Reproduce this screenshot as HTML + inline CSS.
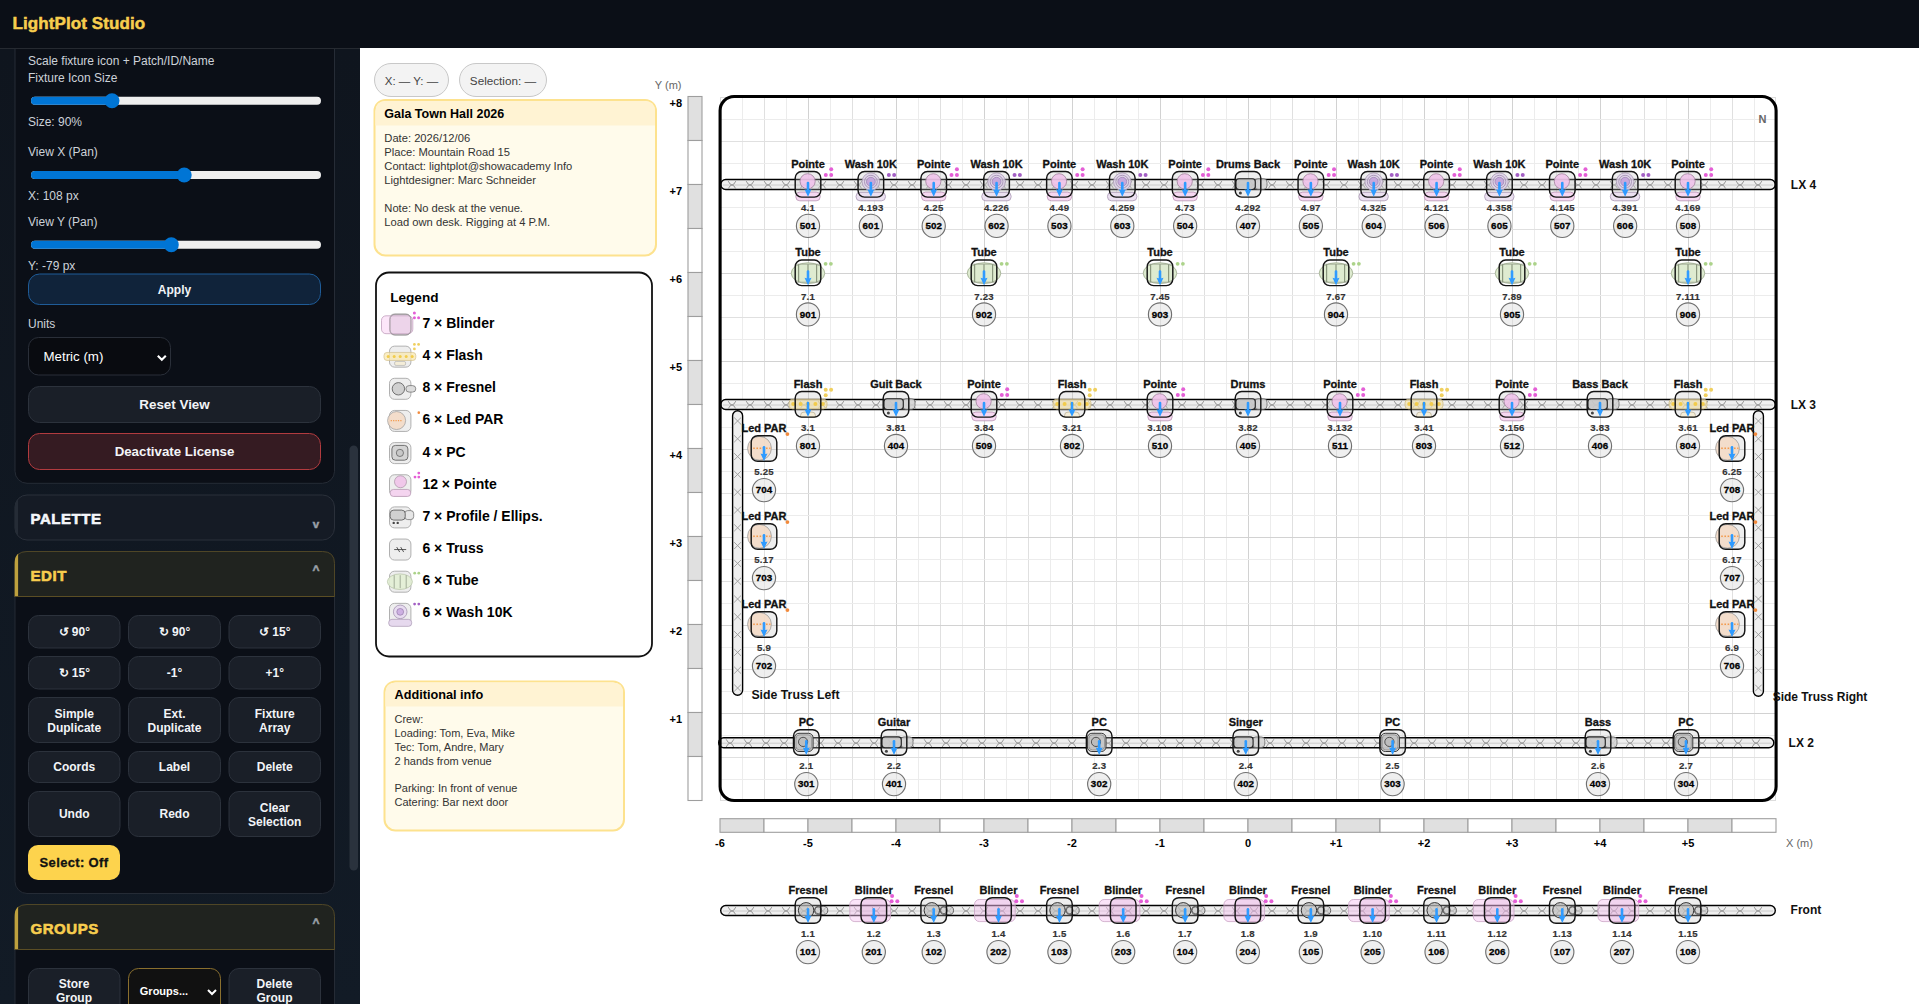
<!DOCTYPE html>
<html><head><meta charset="utf-8"><title>LightPlot Studio</title>
<style>
html,body{margin:0;padding:0;width:1919px;height:1004px;overflow:hidden;background:#fff;}
svg{display:block;font-family:"Liberation Sans", sans-serif;}
</style></head><body>
<svg width="1919" height="1004" viewBox="0 0 1919 1004">
<rect x="360" y="49" width="1559" height="955" fill="#ffffff"/><rect x="374.5" y="63.5" width="74" height="33" rx="16.5" fill="#f3f3f3" stroke="#c8c8c8" stroke-width="1"/><text x="411.50" y="84.50" font-size="11.5" font-weight="400" fill="#444" text-anchor="middle" >X: — Y: —</text><rect x="459.5" y="63.5" width="87" height="33" rx="16.5" fill="#f3f3f3" stroke="#c8c8c8" stroke-width="1"/><text x="503.00" y="84.50" font-size="11.7" font-weight="400" fill="#444" text-anchor="middle" >Selection: —</text><rect x="374.5" y="100" width="281.5" height="155.5" rx="11" fill="#fffbeb" stroke="#fde28e" stroke-width="2"/><path d="M375.5 125.5 L375.5 111 Q375.5 101 385.5 101 L645 101 Q655 101 655 111 L655 125.5 Z" fill="#fff3d3"/><text x="384.30" y="117.70" font-size="12.5" font-weight="700" fill="#000" text-anchor="start" >Gala Town Hall 2026</text><text x="384.30" y="142.00" font-size="11.2" font-weight="400" fill="#333" text-anchor="start" >Date: 2026/12/06</text><text x="384.30" y="156.00" font-size="11.2" font-weight="400" fill="#333" text-anchor="start" >Place: Mountain Road 15</text><text x="384.30" y="170.00" font-size="11.2" font-weight="400" fill="#333" text-anchor="start" >Contact: lightplot@showacademy Info</text><text x="384.30" y="184.00" font-size="11.2" font-weight="400" fill="#333" text-anchor="start" >Lightdesigner: Marc Schneider</text><text x="384.30" y="212.00" font-size="11.2" font-weight="400" fill="#333" text-anchor="start" >Note: No desk at the venue.</text><text x="384.30" y="226.00" font-size="11.2" font-weight="400" fill="#333" text-anchor="start" >Load own desk. Rigging at 4 P.M.</text><rect x="376" y="272.5" width="276" height="384" rx="13" fill="#fff" stroke="#111" stroke-width="1.8"/><text x="390.20" y="301.60" font-size="13.6" font-weight="700" fill="#000" text-anchor="start" >Legend</text><text x="422.40" y="328.00" font-size="14" font-weight="700" fill="#000" text-anchor="start" >7 × Blinder</text><rect x="389.50" y="314.00" width="21.4" height="21" rx="5" fill="#eeeeee" stroke="#a8a8a8" stroke-width="0.9"/><rect x="381.50" y="315.80" width="31.3" height="17.9" rx="4.5" fill="rgba(250,214,245,0.6)" stroke="#c0a0bc" stroke-width="0.8"/><rect x="390.00" y="314.30" width="21" height="20.6" rx="5" fill="rgba(215,180,210,0.25)" stroke="#8f8a8e" stroke-width="0.8"/><circle cx="414.40" cy="313.00" r="1.5" fill="#e45ed6"/><circle cx="414.40" cy="317.80" r="1.5" fill="#e45ed6"/><circle cx="418.60" cy="317.80" r="1.5" fill="#e45ed6"/><text x="422.40" y="360.15" font-size="14" font-weight="700" fill="#000" text-anchor="start" >4 × Flash</text><rect x="389.50" y="346.15" width="21.4" height="21" rx="5" fill="#eeeeee" stroke="#a8a8a8" stroke-width="0.9"/><rect x="384.00" y="352.45" width="31.8" height="8" rx="3" fill="rgba(248,232,178,0.75)" stroke="#d2c08e" stroke-width="0.7"/><circle cx="388.20" cy="356.45" r="1.5" fill="#f2cc4c"/><circle cx="394.20" cy="356.45" r="1.5" fill="#f2cc4c"/><circle cx="400.20" cy="356.45" r="1.5" fill="#f2cc4c"/><circle cx="406.20" cy="356.45" r="1.5" fill="#f2cc4c"/><circle cx="412.20" cy="356.45" r="1.5" fill="#f2cc4c"/><rect x="394.60" y="361.45" width="11" height="4" rx="1.5" fill="#f4edd8" stroke="#aaa" stroke-width="0.6"/><circle cx="414.40" cy="344.45" r="1.4" fill="#f0d060"/><circle cx="418.60" cy="344.45" r="1.4" fill="#f0d060"/><circle cx="414.40" cy="348.95" r="1.4" fill="#f0d060"/><text x="422.40" y="392.30" font-size="14" font-weight="700" fill="#000" text-anchor="start" >8 × Fresnel</text><rect x="389.50" y="378.30" width="21.4" height="21" rx="5" fill="#eeeeee" stroke="#a8a8a8" stroke-width="0.9"/><rect x="405.90" y="385.60" width="9.9" height="6.5" rx="3.2" fill="#ddd" stroke="#666" stroke-width="0.7"/><circle cx="398.40" cy="388.80" r="6.2" fill="#d0d0d0" stroke="#555" stroke-width="0.8"/><text x="422.40" y="424.45" font-size="14" font-weight="700" fill="#000" text-anchor="start" >6 × Led PAR</text><rect x="389.50" y="410.45" width="21.4" height="21" rx="5" fill="#eeeeee" stroke="#a8a8a8" stroke-width="0.9"/><circle cx="396.60" cy="420.55" r="9" fill="rgba(243,218,198,0.9)" stroke="#999" stroke-width="0.7"/><line x1="390.70" y1="420.55" x2="401.70" y2="420.55" stroke="#f39a4c" stroke-width="1.2" stroke-dasharray="1.2 1.2"/><circle cx="418.80" cy="412.65" r="1.3" fill="#f28a3c"/><text x="422.40" y="456.60" font-size="14" font-weight="700" fill="#000" text-anchor="start" >4 × PC</text><rect x="389.50" y="442.60" width="21.4" height="21" rx="5" fill="#eeeeee" stroke="#a8a8a8" stroke-width="0.9"/><rect x="391.90" y="445.40" width="16" height="14.8" rx="3.5" fill="#d4d4d4" stroke="#555" stroke-width="0.8"/><circle cx="399.90" cy="452.90" r="3.6" fill="#c8c8c8" stroke="#555" stroke-width="0.7"/><text x="422.40" y="488.75" font-size="14" font-weight="700" fill="#000" text-anchor="start" >12 × Pointe</text><rect x="389.50" y="474.75" width="21.4" height="21" rx="5" fill="#eeeeee" stroke="#a8a8a8" stroke-width="0.9"/><circle cx="400.50" cy="481.75" r="6" fill="#f0c8ea" stroke="#a890a4" stroke-width="0.7"/><rect x="390.20" y="489.45" width="20.5" height="7" rx="3.2" fill="#f4d4ef" stroke="#b090ac" stroke-width="0.7"/><circle cx="418.80" cy="473.05" r="1.4" fill="#e45ed6"/><circle cx="415.00" cy="477.05" r="1.4" fill="#e45ed6"/><circle cx="418.80" cy="477.05" r="1.4" fill="#e45ed6"/><text x="422.40" y="520.90" font-size="14" font-weight="700" fill="#000" text-anchor="start" >7 × Profile / Ellips.</text><rect x="389.50" y="506.90" width="21.4" height="21" rx="5" fill="#eeeeee" stroke="#a8a8a8" stroke-width="0.9"/><rect x="404.70" y="510.60" width="9" height="9" rx="3" fill="#e6e6e6" stroke="#666" stroke-width="0.7"/><rect x="390.20" y="510.10" width="15" height="10" rx="3.5" fill="#d0d0d0" stroke="#555" stroke-width="0.8"/><circle cx="393.70" cy="522.90" r="1.2" fill="#444"/><circle cx="397.70" cy="522.90" r="1.2" fill="#444"/><text x="422.40" y="553.05" font-size="14" font-weight="700" fill="#000" text-anchor="start" >6 × Truss</text><rect x="389.50" y="539.05" width="21.4" height="21" rx="5" fill="#eeeeee" stroke="#a8a8a8" stroke-width="0.9"/><path d="M394.20 549.55L406.20 549.55M396.70 547.05L399.70 552.05M400.70 547.05L403.70 552.05" stroke="#333" stroke-width="0.8" fill="none"/><text x="422.40" y="585.20" font-size="14" font-weight="700" fill="#000" text-anchor="start" >6 × Tube</text><rect x="389.50" y="571.20" width="21.4" height="21" rx="5" fill="#eeeeee" stroke="#a8a8a8" stroke-width="0.9"/><ellipse cx="399.90" cy="581.70" rx="12.5" ry="7.8" fill="rgba(226,238,212,0.9)" stroke="#b5c2a5" stroke-width="0.7"/><line x1="394.20" y1="575.20" x2="394.20" y2="588.20" stroke="#9aa590" stroke-width="0.9"/><line x1="400.20" y1="575.20" x2="400.20" y2="588.20" stroke="#9aa590" stroke-width="0.9"/><line x1="406.20" y1="575.20" x2="406.20" y2="588.20" stroke="#9aa590" stroke-width="0.9"/><circle cx="414.70" cy="573.20" r="1.4" fill="#acd38a"/><circle cx="418.80" cy="573.20" r="1.4" fill="#acd38a"/><text x="422.40" y="617.35" font-size="14" font-weight="700" fill="#000" text-anchor="start" >6 × Wash 10K</text><rect x="389.50" y="603.35" width="21.4" height="21" rx="5" fill="#eeeeee" stroke="#a8a8a8" stroke-width="0.9"/><circle cx="400.20" cy="611.85" r="6.8" fill="#e8dcf0" stroke="#9a88a8" stroke-width="0.7"/><circle cx="400.20" cy="611.85" r="3.4" fill="#cdb0e2" stroke="#8a70a0" stroke-width="0.6"/><rect x="388.70" y="619.35" width="23" height="7" rx="3.2" fill="#e6d9ee" stroke="#a897b2" stroke-width="0.7"/><circle cx="414.60" cy="604.05" r="1.4" fill="#a35fc4"/><circle cx="418.80" cy="604.05" r="1.4" fill="#a35fc4"/><rect x="384.5" y="681.5" width="239.5" height="149" rx="11" fill="#fffbeb" stroke="#fde28e" stroke-width="2"/><path d="M385.5 706.6 L385.5 692.5 Q385.5 682.5 395.5 682.5 L613 682.5 Q623 682.5 623 692.5 L623 706.6 Z" fill="#fff3d3"/><text x="394.50" y="698.70" font-size="12.7" font-weight="700" fill="#000" text-anchor="start" >Additional info</text><text x="394.50" y="722.70" font-size="11" font-weight="400" fill="#333" text-anchor="start" >Crew:</text><text x="394.50" y="736.65" font-size="11" font-weight="400" fill="#333" text-anchor="start" >Loading: Tom, Eva, Mike</text><text x="394.50" y="750.60" font-size="11" font-weight="400" fill="#333" text-anchor="start" >Tec: Tom, Andre, Mary</text><text x="394.50" y="764.55" font-size="11" font-weight="400" fill="#333" text-anchor="start" >2 hands from venue</text><text x="394.50" y="792.45" font-size="11" font-weight="400" fill="#333" text-anchor="start" >Parking: In front of venue</text><text x="394.50" y="806.40" font-size="11" font-weight="400" fill="#333" text-anchor="start" >Catering: Bar next door</text><text x="681.50" y="88.50" font-size="11" font-weight="400" fill="#666" text-anchor="end" >Y (m)</text><rect x="688" y="96.5" width="14" height="44" fill="#e0e0e0" stroke="#9e9e9e" stroke-width="1.1"/><rect x="688" y="140.5" width="14" height="44" fill="#ffffff" stroke="#9e9e9e" stroke-width="1.1"/><rect x="688" y="184.5" width="14" height="44" fill="#e0e0e0" stroke="#9e9e9e" stroke-width="1.1"/><rect x="688" y="228.5" width="14" height="44" fill="#ffffff" stroke="#9e9e9e" stroke-width="1.1"/><rect x="688" y="272.5" width="14" height="44" fill="#e0e0e0" stroke="#9e9e9e" stroke-width="1.1"/><rect x="688" y="316.5" width="14" height="44" fill="#ffffff" stroke="#9e9e9e" stroke-width="1.1"/><rect x="688" y="360.5" width="14" height="44" fill="#e0e0e0" stroke="#9e9e9e" stroke-width="1.1"/><rect x="688" y="404.5" width="14" height="44" fill="#ffffff" stroke="#9e9e9e" stroke-width="1.1"/><rect x="688" y="448.5" width="14" height="44" fill="#e0e0e0" stroke="#9e9e9e" stroke-width="1.1"/><rect x="688" y="492.5" width="14" height="44" fill="#ffffff" stroke="#9e9e9e" stroke-width="1.1"/><rect x="688" y="536.5" width="14" height="44" fill="#e0e0e0" stroke="#9e9e9e" stroke-width="1.1"/><rect x="688" y="580.5" width="14" height="44" fill="#ffffff" stroke="#9e9e9e" stroke-width="1.1"/><rect x="688" y="624.5" width="14" height="44" fill="#e0e0e0" stroke="#9e9e9e" stroke-width="1.1"/><rect x="688" y="668.5" width="14" height="44" fill="#ffffff" stroke="#9e9e9e" stroke-width="1.1"/><rect x="688" y="712.5" width="14" height="44" fill="#e0e0e0" stroke="#9e9e9e" stroke-width="1.1"/><rect x="688" y="756.5" width="14" height="44" fill="#ffffff" stroke="#9e9e9e" stroke-width="1.1"/><text x="682.00" y="107.00" font-size="11" font-weight="700" fill="#000" text-anchor="end" >+8</text><text x="682.00" y="195.00" font-size="11" font-weight="700" fill="#000" text-anchor="end" >+7</text><text x="682.00" y="283.00" font-size="11" font-weight="700" fill="#000" text-anchor="end" >+6</text><text x="682.00" y="371.00" font-size="11" font-weight="700" fill="#000" text-anchor="end" >+5</text><text x="682.00" y="459.00" font-size="11" font-weight="700" fill="#000" text-anchor="end" >+4</text><text x="682.00" y="547.00" font-size="11" font-weight="700" fill="#000" text-anchor="end" >+3</text><text x="682.00" y="635.00" font-size="11" font-weight="700" fill="#000" text-anchor="end" >+2</text><text x="682.00" y="723.00" font-size="11" font-weight="700" fill="#000" text-anchor="end" >+1</text><rect x="720" y="818.7" width="44" height="13.6" fill="#e0e0e0" stroke="#9e9e9e" stroke-width="1.1"/><rect x="764" y="818.7" width="44" height="13.6" fill="#ffffff" stroke="#9e9e9e" stroke-width="1.1"/><rect x="808" y="818.7" width="44" height="13.6" fill="#e0e0e0" stroke="#9e9e9e" stroke-width="1.1"/><rect x="852" y="818.7" width="44" height="13.6" fill="#ffffff" stroke="#9e9e9e" stroke-width="1.1"/><rect x="896" y="818.7" width="44" height="13.6" fill="#e0e0e0" stroke="#9e9e9e" stroke-width="1.1"/><rect x="940" y="818.7" width="44" height="13.6" fill="#ffffff" stroke="#9e9e9e" stroke-width="1.1"/><rect x="984" y="818.7" width="44" height="13.6" fill="#e0e0e0" stroke="#9e9e9e" stroke-width="1.1"/><rect x="1028" y="818.7" width="44" height="13.6" fill="#ffffff" stroke="#9e9e9e" stroke-width="1.1"/><rect x="1072" y="818.7" width="44" height="13.6" fill="#e0e0e0" stroke="#9e9e9e" stroke-width="1.1"/><rect x="1116" y="818.7" width="44" height="13.6" fill="#ffffff" stroke="#9e9e9e" stroke-width="1.1"/><rect x="1160" y="818.7" width="44" height="13.6" fill="#e0e0e0" stroke="#9e9e9e" stroke-width="1.1"/><rect x="1204" y="818.7" width="44" height="13.6" fill="#ffffff" stroke="#9e9e9e" stroke-width="1.1"/><rect x="1248" y="818.7" width="44" height="13.6" fill="#e0e0e0" stroke="#9e9e9e" stroke-width="1.1"/><rect x="1292" y="818.7" width="44" height="13.6" fill="#ffffff" stroke="#9e9e9e" stroke-width="1.1"/><rect x="1336" y="818.7" width="44" height="13.6" fill="#e0e0e0" stroke="#9e9e9e" stroke-width="1.1"/><rect x="1380" y="818.7" width="44" height="13.6" fill="#ffffff" stroke="#9e9e9e" stroke-width="1.1"/><rect x="1424" y="818.7" width="44" height="13.6" fill="#e0e0e0" stroke="#9e9e9e" stroke-width="1.1"/><rect x="1468" y="818.7" width="44" height="13.6" fill="#ffffff" stroke="#9e9e9e" stroke-width="1.1"/><rect x="1512" y="818.7" width="44" height="13.6" fill="#e0e0e0" stroke="#9e9e9e" stroke-width="1.1"/><rect x="1556" y="818.7" width="44" height="13.6" fill="#ffffff" stroke="#9e9e9e" stroke-width="1.1"/><rect x="1600" y="818.7" width="44" height="13.6" fill="#e0e0e0" stroke="#9e9e9e" stroke-width="1.1"/><rect x="1644" y="818.7" width="44" height="13.6" fill="#ffffff" stroke="#9e9e9e" stroke-width="1.1"/><rect x="1688" y="818.7" width="44" height="13.6" fill="#e0e0e0" stroke="#9e9e9e" stroke-width="1.1"/><rect x="1732" y="818.7" width="44" height="13.6" fill="#ffffff" stroke="#9e9e9e" stroke-width="1.1"/><text x="720.00" y="847.20" font-size="11" font-weight="700" fill="#000" text-anchor="middle" >-6</text><text x="808.00" y="847.20" font-size="11" font-weight="700" fill="#000" text-anchor="middle" >-5</text><text x="896.00" y="847.20" font-size="11" font-weight="700" fill="#000" text-anchor="middle" >-4</text><text x="984.00" y="847.20" font-size="11" font-weight="700" fill="#000" text-anchor="middle" >-3</text><text x="1072.00" y="847.20" font-size="11" font-weight="700" fill="#000" text-anchor="middle" >-2</text><text x="1160.00" y="847.20" font-size="11" font-weight="700" fill="#000" text-anchor="middle" >-1</text><text x="1248.00" y="847.20" font-size="11" font-weight="700" fill="#000" text-anchor="middle" >0</text><text x="1336.00" y="847.20" font-size="11" font-weight="700" fill="#000" text-anchor="middle" >+1</text><text x="1424.00" y="847.20" font-size="11" font-weight="700" fill="#000" text-anchor="middle" >+2</text><text x="1512.00" y="847.20" font-size="11" font-weight="700" fill="#000" text-anchor="middle" >+3</text><text x="1600.00" y="847.20" font-size="11" font-weight="700" fill="#000" text-anchor="middle" >+4</text><text x="1688.00" y="847.20" font-size="11" font-weight="700" fill="#000" text-anchor="middle" >+5</text><text x="1786.00" y="847.30" font-size="11" font-weight="400" fill="#666" text-anchor="start" >X (m)</text><rect x="720.5" y="97.5" width="1055" height="703" fill="#fff" stroke="#dcdcdc" stroke-width="1"/><line x1="742.5" y1="97" x2="742.5" y2="801" stroke="#ececec" stroke-width="1"/><line x1="764.5" y1="97" x2="764.5" y2="801" stroke="#e0e0e0" stroke-width="1"/><line x1="786.5" y1="97" x2="786.5" y2="801" stroke="#ececec" stroke-width="1"/><line x1="808.5" y1="97" x2="808.5" y2="801" stroke="#d2d2d2" stroke-width="1"/><line x1="830.5" y1="97" x2="830.5" y2="801" stroke="#ececec" stroke-width="1"/><line x1="852.5" y1="97" x2="852.5" y2="801" stroke="#e0e0e0" stroke-width="1"/><line x1="874.5" y1="97" x2="874.5" y2="801" stroke="#ececec" stroke-width="1"/><line x1="896.5" y1="97" x2="896.5" y2="801" stroke="#d2d2d2" stroke-width="1"/><line x1="918.5" y1="97" x2="918.5" y2="801" stroke="#ececec" stroke-width="1"/><line x1="940.5" y1="97" x2="940.5" y2="801" stroke="#e0e0e0" stroke-width="1"/><line x1="962.5" y1="97" x2="962.5" y2="801" stroke="#ececec" stroke-width="1"/><line x1="984.5" y1="97" x2="984.5" y2="801" stroke="#d2d2d2" stroke-width="1"/><line x1="1006.5" y1="97" x2="1006.5" y2="801" stroke="#ececec" stroke-width="1"/><line x1="1028.5" y1="97" x2="1028.5" y2="801" stroke="#e0e0e0" stroke-width="1"/><line x1="1050.5" y1="97" x2="1050.5" y2="801" stroke="#ececec" stroke-width="1"/><line x1="1072.5" y1="97" x2="1072.5" y2="801" stroke="#d2d2d2" stroke-width="1"/><line x1="1094.5" y1="97" x2="1094.5" y2="801" stroke="#ececec" stroke-width="1"/><line x1="1116.5" y1="97" x2="1116.5" y2="801" stroke="#e0e0e0" stroke-width="1"/><line x1="1138.5" y1="97" x2="1138.5" y2="801" stroke="#ececec" stroke-width="1"/><line x1="1160.5" y1="97" x2="1160.5" y2="801" stroke="#d2d2d2" stroke-width="1"/><line x1="1182.5" y1="97" x2="1182.5" y2="801" stroke="#ececec" stroke-width="1"/><line x1="1204.5" y1="97" x2="1204.5" y2="801" stroke="#e0e0e0" stroke-width="1"/><line x1="1226.5" y1="97" x2="1226.5" y2="801" stroke="#ececec" stroke-width="1"/><line x1="1248.5" y1="97" x2="1248.5" y2="801" stroke="#d2d2d2" stroke-width="1"/><line x1="1270.5" y1="97" x2="1270.5" y2="801" stroke="#ececec" stroke-width="1"/><line x1="1292.5" y1="97" x2="1292.5" y2="801" stroke="#e0e0e0" stroke-width="1"/><line x1="1314.5" y1="97" x2="1314.5" y2="801" stroke="#ececec" stroke-width="1"/><line x1="1336.5" y1="97" x2="1336.5" y2="801" stroke="#d2d2d2" stroke-width="1"/><line x1="1358.5" y1="97" x2="1358.5" y2="801" stroke="#ececec" stroke-width="1"/><line x1="1380.5" y1="97" x2="1380.5" y2="801" stroke="#e0e0e0" stroke-width="1"/><line x1="1402.5" y1="97" x2="1402.5" y2="801" stroke="#ececec" stroke-width="1"/><line x1="1424.5" y1="97" x2="1424.5" y2="801" stroke="#d2d2d2" stroke-width="1"/><line x1="1446.5" y1="97" x2="1446.5" y2="801" stroke="#ececec" stroke-width="1"/><line x1="1468.5" y1="97" x2="1468.5" y2="801" stroke="#e0e0e0" stroke-width="1"/><line x1="1490.5" y1="97" x2="1490.5" y2="801" stroke="#ececec" stroke-width="1"/><line x1="1512.5" y1="97" x2="1512.5" y2="801" stroke="#d2d2d2" stroke-width="1"/><line x1="1534.5" y1="97" x2="1534.5" y2="801" stroke="#ececec" stroke-width="1"/><line x1="1556.5" y1="97" x2="1556.5" y2="801" stroke="#e0e0e0" stroke-width="1"/><line x1="1578.5" y1="97" x2="1578.5" y2="801" stroke="#ececec" stroke-width="1"/><line x1="1600.5" y1="97" x2="1600.5" y2="801" stroke="#d2d2d2" stroke-width="1"/><line x1="1622.5" y1="97" x2="1622.5" y2="801" stroke="#ececec" stroke-width="1"/><line x1="1644.5" y1="97" x2="1644.5" y2="801" stroke="#e0e0e0" stroke-width="1"/><line x1="1666.5" y1="97" x2="1666.5" y2="801" stroke="#ececec" stroke-width="1"/><line x1="1688.5" y1="97" x2="1688.5" y2="801" stroke="#d2d2d2" stroke-width="1"/><line x1="1710.5" y1="97" x2="1710.5" y2="801" stroke="#ececec" stroke-width="1"/><line x1="1732.5" y1="97" x2="1732.5" y2="801" stroke="#e0e0e0" stroke-width="1"/><line x1="1754.5" y1="97" x2="1754.5" y2="801" stroke="#ececec" stroke-width="1"/><line x1="720" y1="119.5" x2="1776" y2="119.5" stroke="#ececec" stroke-width="1"/><line x1="720" y1="141.5" x2="1776" y2="141.5" stroke="#e0e0e0" stroke-width="1"/><line x1="720" y1="163.5" x2="1776" y2="163.5" stroke="#ececec" stroke-width="1"/><line x1="720" y1="185.5" x2="1776" y2="185.5" stroke="#d2d2d2" stroke-width="1"/><line x1="720" y1="207.5" x2="1776" y2="207.5" stroke="#ececec" stroke-width="1"/><line x1="720" y1="229.5" x2="1776" y2="229.5" stroke="#e0e0e0" stroke-width="1"/><line x1="720" y1="251.5" x2="1776" y2="251.5" stroke="#ececec" stroke-width="1"/><line x1="720" y1="273.5" x2="1776" y2="273.5" stroke="#d2d2d2" stroke-width="1"/><line x1="720" y1="295.5" x2="1776" y2="295.5" stroke="#ececec" stroke-width="1"/><line x1="720" y1="317.5" x2="1776" y2="317.5" stroke="#e0e0e0" stroke-width="1"/><line x1="720" y1="339.5" x2="1776" y2="339.5" stroke="#ececec" stroke-width="1"/><line x1="720" y1="361.5" x2="1776" y2="361.5" stroke="#d2d2d2" stroke-width="1"/><line x1="720" y1="383.5" x2="1776" y2="383.5" stroke="#ececec" stroke-width="1"/><line x1="720" y1="405.5" x2="1776" y2="405.5" stroke="#e0e0e0" stroke-width="1"/><line x1="720" y1="427.5" x2="1776" y2="427.5" stroke="#ececec" stroke-width="1"/><line x1="720" y1="449.5" x2="1776" y2="449.5" stroke="#d2d2d2" stroke-width="1"/><line x1="720" y1="471.5" x2="1776" y2="471.5" stroke="#ececec" stroke-width="1"/><line x1="720" y1="493.5" x2="1776" y2="493.5" stroke="#e0e0e0" stroke-width="1"/><line x1="720" y1="515.5" x2="1776" y2="515.5" stroke="#ececec" stroke-width="1"/><line x1="720" y1="537.5" x2="1776" y2="537.5" stroke="#d2d2d2" stroke-width="1"/><line x1="720" y1="559.5" x2="1776" y2="559.5" stroke="#ececec" stroke-width="1"/><line x1="720" y1="581.5" x2="1776" y2="581.5" stroke="#e0e0e0" stroke-width="1"/><line x1="720" y1="603.5" x2="1776" y2="603.5" stroke="#ececec" stroke-width="1"/><line x1="720" y1="625.5" x2="1776" y2="625.5" stroke="#d2d2d2" stroke-width="1"/><line x1="720" y1="647.5" x2="1776" y2="647.5" stroke="#ececec" stroke-width="1"/><line x1="720" y1="669.5" x2="1776" y2="669.5" stroke="#e0e0e0" stroke-width="1"/><line x1="720" y1="691.5" x2="1776" y2="691.5" stroke="#ececec" stroke-width="1"/><line x1="720" y1="713.5" x2="1776" y2="713.5" stroke="#d2d2d2" stroke-width="1"/><line x1="720" y1="735.5" x2="1776" y2="735.5" stroke="#ececec" stroke-width="1"/><line x1="720" y1="757.5" x2="1776" y2="757.5" stroke="#e0e0e0" stroke-width="1"/><line x1="720" y1="779.5" x2="1776" y2="779.5" stroke="#ececec" stroke-width="1"/><rect x="720.70" y="179.50" width="1054.60" height="10" rx="5" fill="#efefef" stroke="#000" stroke-width="1.4"/><line x1="723" y1="185.00" x2="1773" y2="185.00" stroke="#c4c4c4" stroke-width="0.8"/><path d="M728.2 181.1Q732.0 188.9 735.8 181.1M728.2 188.8Q732.0 181.0 735.8 188.8M746.2 181.1Q750.0 188.9 753.8 181.1M746.2 188.8Q750.0 181.0 753.8 188.8M764.2 181.1Q768.0 188.9 771.8 181.1M764.2 188.8Q768.0 181.0 771.8 188.8M782.2 181.1Q786.0 188.9 789.8 181.1M782.2 188.8Q786.0 181.0 789.8 188.8M800.2 181.1Q804.0 188.9 807.8 181.1M800.2 188.8Q804.0 181.0 807.8 188.8M818.2 181.1Q822.0 188.9 825.8 181.1M818.2 188.8Q822.0 181.0 825.8 188.8M836.2 181.1Q840.0 188.9 843.8 181.1M836.2 188.8Q840.0 181.0 843.8 188.8M854.2 181.1Q858.0 188.9 861.8 181.1M854.2 188.8Q858.0 181.0 861.8 188.8M872.2 181.1Q876.0 188.9 879.8 181.1M872.2 188.8Q876.0 181.0 879.8 188.8M890.2 181.1Q894.0 188.9 897.8 181.1M890.2 188.8Q894.0 181.0 897.8 188.8M908.2 181.1Q912.0 188.9 915.8 181.1M908.2 188.8Q912.0 181.0 915.8 188.8M926.2 181.1Q930.0 188.9 933.8 181.1M926.2 188.8Q930.0 181.0 933.8 188.8M944.2 181.1Q948.0 188.9 951.8 181.1M944.2 188.8Q948.0 181.0 951.8 188.8M962.2 181.1Q966.0 188.9 969.8 181.1M962.2 188.8Q966.0 181.0 969.8 188.8M980.2 181.1Q984.0 188.9 987.8 181.1M980.2 188.8Q984.0 181.0 987.8 188.8M998.2 181.1Q1002.0 188.9 1005.8 181.1M998.2 188.8Q1002.0 181.0 1005.8 188.8M1016.2 181.1Q1020.0 188.9 1023.8 181.1M1016.2 188.8Q1020.0 181.0 1023.8 188.8M1034.2 181.1Q1038.0 188.9 1041.8 181.1M1034.2 188.8Q1038.0 181.0 1041.8 188.8M1052.2 181.1Q1056.0 188.9 1059.8 181.1M1052.2 188.8Q1056.0 181.0 1059.8 188.8M1070.2 181.1Q1074.0 188.9 1077.8 181.1M1070.2 188.8Q1074.0 181.0 1077.8 188.8M1088.2 181.1Q1092.0 188.9 1095.8 181.1M1088.2 188.8Q1092.0 181.0 1095.8 188.8M1106.2 181.1Q1110.0 188.9 1113.8 181.1M1106.2 188.8Q1110.0 181.0 1113.8 188.8M1124.2 181.1Q1128.0 188.9 1131.8 181.1M1124.2 188.8Q1128.0 181.0 1131.8 188.8M1142.2 181.1Q1146.0 188.9 1149.8 181.1M1142.2 188.8Q1146.0 181.0 1149.8 188.8M1160.2 181.1Q1164.0 188.9 1167.8 181.1M1160.2 188.8Q1164.0 181.0 1167.8 188.8M1178.2 181.1Q1182.0 188.9 1185.8 181.1M1178.2 188.8Q1182.0 181.0 1185.8 188.8M1196.2 181.1Q1200.0 188.9 1203.8 181.1M1196.2 188.8Q1200.0 181.0 1203.8 188.8M1214.2 181.1Q1218.0 188.9 1221.8 181.1M1214.2 188.8Q1218.0 181.0 1221.8 188.8M1232.2 181.1Q1236.0 188.9 1239.8 181.1M1232.2 188.8Q1236.0 181.0 1239.8 188.8M1250.2 181.1Q1254.0 188.9 1257.8 181.1M1250.2 188.8Q1254.0 181.0 1257.8 188.8M1268.2 181.1Q1272.0 188.9 1275.8 181.1M1268.2 188.8Q1272.0 181.0 1275.8 188.8M1286.2 181.1Q1290.0 188.9 1293.8 181.1M1286.2 188.8Q1290.0 181.0 1293.8 188.8M1304.2 181.1Q1308.0 188.9 1311.8 181.1M1304.2 188.8Q1308.0 181.0 1311.8 188.8M1322.2 181.1Q1326.0 188.9 1329.8 181.1M1322.2 188.8Q1326.0 181.0 1329.8 188.8M1340.2 181.1Q1344.0 188.9 1347.8 181.1M1340.2 188.8Q1344.0 181.0 1347.8 188.8M1358.2 181.1Q1362.0 188.9 1365.8 181.1M1358.2 188.8Q1362.0 181.0 1365.8 188.8M1376.2 181.1Q1380.0 188.9 1383.8 181.1M1376.2 188.8Q1380.0 181.0 1383.8 188.8M1394.2 181.1Q1398.0 188.9 1401.8 181.1M1394.2 188.8Q1398.0 181.0 1401.8 188.8M1412.2 181.1Q1416.0 188.9 1419.8 181.1M1412.2 188.8Q1416.0 181.0 1419.8 188.8M1430.2 181.1Q1434.0 188.9 1437.8 181.1M1430.2 188.8Q1434.0 181.0 1437.8 188.8M1448.2 181.1Q1452.0 188.9 1455.8 181.1M1448.2 188.8Q1452.0 181.0 1455.8 188.8M1466.2 181.1Q1470.0 188.9 1473.8 181.1M1466.2 188.8Q1470.0 181.0 1473.8 188.8M1484.2 181.1Q1488.0 188.9 1491.8 181.1M1484.2 188.8Q1488.0 181.0 1491.8 188.8M1502.2 181.1Q1506.0 188.9 1509.8 181.1M1502.2 188.8Q1506.0 181.0 1509.8 188.8M1520.2 181.1Q1524.0 188.9 1527.8 181.1M1520.2 188.8Q1524.0 181.0 1527.8 188.8M1538.2 181.1Q1542.0 188.9 1545.8 181.1M1538.2 188.8Q1542.0 181.0 1545.8 188.8M1556.2 181.1Q1560.0 188.9 1563.8 181.1M1556.2 188.8Q1560.0 181.0 1563.8 188.8M1574.2 181.1Q1578.0 188.9 1581.8 181.1M1574.2 188.8Q1578.0 181.0 1581.8 188.8M1592.2 181.1Q1596.0 188.9 1599.8 181.1M1592.2 188.8Q1596.0 181.0 1599.8 188.8M1610.2 181.1Q1614.0 188.9 1617.8 181.1M1610.2 188.8Q1614.0 181.0 1617.8 188.8M1628.2 181.1Q1632.0 188.9 1635.8 181.1M1628.2 188.8Q1632.0 181.0 1635.8 188.8M1646.2 181.1Q1650.0 188.9 1653.8 181.1M1646.2 188.8Q1650.0 181.0 1653.8 188.8M1664.2 181.1Q1668.0 188.9 1671.8 181.1M1664.2 188.8Q1668.0 181.0 1671.8 188.8M1682.2 181.1Q1686.0 188.9 1689.8 181.1M1682.2 188.8Q1686.0 181.0 1689.8 188.8M1700.2 181.1Q1704.0 188.9 1707.8 181.1M1700.2 188.8Q1704.0 181.0 1707.8 188.8M1718.2 181.1Q1722.0 188.9 1725.8 181.1M1718.2 188.8Q1722.0 181.0 1725.8 188.8M1736.2 181.1Q1740.0 188.9 1743.8 181.1M1736.2 188.8Q1740.0 181.0 1743.8 188.8M1754.2 181.1Q1758.0 188.9 1761.8 181.1M1754.2 188.8Q1758.0 181.0 1761.8 188.8" fill="none" stroke="#969696" stroke-width="1"/><rect x="720.70" y="399.50" width="1054.60" height="10" rx="5" fill="#efefef" stroke="#000" stroke-width="1.4"/><line x1="723" y1="405.00" x2="1773" y2="405.00" stroke="#c4c4c4" stroke-width="0.8"/><path d="M728.2 401.1Q732.0 408.9 735.8 401.1M728.2 408.8Q732.0 401.0 735.8 408.8M746.2 401.1Q750.0 408.9 753.8 401.1M746.2 408.8Q750.0 401.0 753.8 408.8M764.2 401.1Q768.0 408.9 771.8 401.1M764.2 408.8Q768.0 401.0 771.8 408.8M782.2 401.1Q786.0 408.9 789.8 401.1M782.2 408.8Q786.0 401.0 789.8 408.8M800.2 401.1Q804.0 408.9 807.8 401.1M800.2 408.8Q804.0 401.0 807.8 408.8M818.2 401.1Q822.0 408.9 825.8 401.1M818.2 408.8Q822.0 401.0 825.8 408.8M836.2 401.1Q840.0 408.9 843.8 401.1M836.2 408.8Q840.0 401.0 843.8 408.8M854.2 401.1Q858.0 408.9 861.8 401.1M854.2 408.8Q858.0 401.0 861.8 408.8M872.2 401.1Q876.0 408.9 879.8 401.1M872.2 408.8Q876.0 401.0 879.8 408.8M890.2 401.1Q894.0 408.9 897.8 401.1M890.2 408.8Q894.0 401.0 897.8 408.8M908.2 401.1Q912.0 408.9 915.8 401.1M908.2 408.8Q912.0 401.0 915.8 408.8M926.2 401.1Q930.0 408.9 933.8 401.1M926.2 408.8Q930.0 401.0 933.8 408.8M944.2 401.1Q948.0 408.9 951.8 401.1M944.2 408.8Q948.0 401.0 951.8 408.8M962.2 401.1Q966.0 408.9 969.8 401.1M962.2 408.8Q966.0 401.0 969.8 408.8M980.2 401.1Q984.0 408.9 987.8 401.1M980.2 408.8Q984.0 401.0 987.8 408.8M998.2 401.1Q1002.0 408.9 1005.8 401.1M998.2 408.8Q1002.0 401.0 1005.8 408.8M1016.2 401.1Q1020.0 408.9 1023.8 401.1M1016.2 408.8Q1020.0 401.0 1023.8 408.8M1034.2 401.1Q1038.0 408.9 1041.8 401.1M1034.2 408.8Q1038.0 401.0 1041.8 408.8M1052.2 401.1Q1056.0 408.9 1059.8 401.1M1052.2 408.8Q1056.0 401.0 1059.8 408.8M1070.2 401.1Q1074.0 408.9 1077.8 401.1M1070.2 408.8Q1074.0 401.0 1077.8 408.8M1088.2 401.1Q1092.0 408.9 1095.8 401.1M1088.2 408.8Q1092.0 401.0 1095.8 408.8M1106.2 401.1Q1110.0 408.9 1113.8 401.1M1106.2 408.8Q1110.0 401.0 1113.8 408.8M1124.2 401.1Q1128.0 408.9 1131.8 401.1M1124.2 408.8Q1128.0 401.0 1131.8 408.8M1142.2 401.1Q1146.0 408.9 1149.8 401.1M1142.2 408.8Q1146.0 401.0 1149.8 408.8M1160.2 401.1Q1164.0 408.9 1167.8 401.1M1160.2 408.8Q1164.0 401.0 1167.8 408.8M1178.2 401.1Q1182.0 408.9 1185.8 401.1M1178.2 408.8Q1182.0 401.0 1185.8 408.8M1196.2 401.1Q1200.0 408.9 1203.8 401.1M1196.2 408.8Q1200.0 401.0 1203.8 408.8M1214.2 401.1Q1218.0 408.9 1221.8 401.1M1214.2 408.8Q1218.0 401.0 1221.8 408.8M1232.2 401.1Q1236.0 408.9 1239.8 401.1M1232.2 408.8Q1236.0 401.0 1239.8 408.8M1250.2 401.1Q1254.0 408.9 1257.8 401.1M1250.2 408.8Q1254.0 401.0 1257.8 408.8M1268.2 401.1Q1272.0 408.9 1275.8 401.1M1268.2 408.8Q1272.0 401.0 1275.8 408.8M1286.2 401.1Q1290.0 408.9 1293.8 401.1M1286.2 408.8Q1290.0 401.0 1293.8 408.8M1304.2 401.1Q1308.0 408.9 1311.8 401.1M1304.2 408.8Q1308.0 401.0 1311.8 408.8M1322.2 401.1Q1326.0 408.9 1329.8 401.1M1322.2 408.8Q1326.0 401.0 1329.8 408.8M1340.2 401.1Q1344.0 408.9 1347.8 401.1M1340.2 408.8Q1344.0 401.0 1347.8 408.8M1358.2 401.1Q1362.0 408.9 1365.8 401.1M1358.2 408.8Q1362.0 401.0 1365.8 408.8M1376.2 401.1Q1380.0 408.9 1383.8 401.1M1376.2 408.8Q1380.0 401.0 1383.8 408.8M1394.2 401.1Q1398.0 408.9 1401.8 401.1M1394.2 408.8Q1398.0 401.0 1401.8 408.8M1412.2 401.1Q1416.0 408.9 1419.8 401.1M1412.2 408.8Q1416.0 401.0 1419.8 408.8M1430.2 401.1Q1434.0 408.9 1437.8 401.1M1430.2 408.8Q1434.0 401.0 1437.8 408.8M1448.2 401.1Q1452.0 408.9 1455.8 401.1M1448.2 408.8Q1452.0 401.0 1455.8 408.8M1466.2 401.1Q1470.0 408.9 1473.8 401.1M1466.2 408.8Q1470.0 401.0 1473.8 408.8M1484.2 401.1Q1488.0 408.9 1491.8 401.1M1484.2 408.8Q1488.0 401.0 1491.8 408.8M1502.2 401.1Q1506.0 408.9 1509.8 401.1M1502.2 408.8Q1506.0 401.0 1509.8 408.8M1520.2 401.1Q1524.0 408.9 1527.8 401.1M1520.2 408.8Q1524.0 401.0 1527.8 408.8M1538.2 401.1Q1542.0 408.9 1545.8 401.1M1538.2 408.8Q1542.0 401.0 1545.8 408.8M1556.2 401.1Q1560.0 408.9 1563.8 401.1M1556.2 408.8Q1560.0 401.0 1563.8 408.8M1574.2 401.1Q1578.0 408.9 1581.8 401.1M1574.2 408.8Q1578.0 401.0 1581.8 408.8M1592.2 401.1Q1596.0 408.9 1599.8 401.1M1592.2 408.8Q1596.0 401.0 1599.8 408.8M1610.2 401.1Q1614.0 408.9 1617.8 401.1M1610.2 408.8Q1614.0 401.0 1617.8 408.8M1628.2 401.1Q1632.0 408.9 1635.8 401.1M1628.2 408.8Q1632.0 401.0 1635.8 408.8M1646.2 401.1Q1650.0 408.9 1653.8 401.1M1646.2 408.8Q1650.0 401.0 1653.8 408.8M1664.2 401.1Q1668.0 408.9 1671.8 401.1M1664.2 408.8Q1668.0 401.0 1671.8 408.8M1682.2 401.1Q1686.0 408.9 1689.8 401.1M1682.2 408.8Q1686.0 401.0 1689.8 408.8M1700.2 401.1Q1704.0 408.9 1707.8 401.1M1700.2 408.8Q1704.0 401.0 1707.8 408.8M1718.2 401.1Q1722.0 408.9 1725.8 401.1M1718.2 408.8Q1722.0 401.0 1725.8 408.8M1736.2 401.1Q1740.0 408.9 1743.8 401.1M1736.2 408.8Q1740.0 401.0 1743.8 408.8M1754.2 401.1Q1758.0 408.9 1761.8 401.1M1754.2 408.8Q1758.0 401.0 1761.8 408.8" fill="none" stroke="#969696" stroke-width="1"/><rect x="718.70" y="737.70" width="1055.10" height="10" rx="5" fill="#efefef" stroke="#000" stroke-width="1.4"/><line x1="721" y1="743.20" x2="1771.5" y2="743.20" stroke="#c4c4c4" stroke-width="0.8"/><path d="M726.2 739.3Q730.0 747.1 733.8 739.3M726.2 747.0Q730.0 739.2 733.8 747.0M744.2 739.3Q748.0 747.1 751.8 739.3M744.2 747.0Q748.0 739.2 751.8 747.0M762.2 739.3Q766.0 747.1 769.8 739.3M762.2 747.0Q766.0 739.2 769.8 747.0M780.2 739.3Q784.0 747.1 787.8 739.3M780.2 747.0Q784.0 739.2 787.8 747.0M798.2 739.3Q802.0 747.1 805.8 739.3M798.2 747.0Q802.0 739.2 805.8 747.0M816.2 739.3Q820.0 747.1 823.8 739.3M816.2 747.0Q820.0 739.2 823.8 747.0M834.2 739.3Q838.0 747.1 841.8 739.3M834.2 747.0Q838.0 739.2 841.8 747.0M852.2 739.3Q856.0 747.1 859.8 739.3M852.2 747.0Q856.0 739.2 859.8 747.0M870.2 739.3Q874.0 747.1 877.8 739.3M870.2 747.0Q874.0 739.2 877.8 747.0M888.2 739.3Q892.0 747.1 895.8 739.3M888.2 747.0Q892.0 739.2 895.8 747.0M906.2 739.3Q910.0 747.1 913.8 739.3M906.2 747.0Q910.0 739.2 913.8 747.0M924.2 739.3Q928.0 747.1 931.8 739.3M924.2 747.0Q928.0 739.2 931.8 747.0M942.2 739.3Q946.0 747.1 949.8 739.3M942.2 747.0Q946.0 739.2 949.8 747.0M960.2 739.3Q964.0 747.1 967.8 739.3M960.2 747.0Q964.0 739.2 967.8 747.0M978.2 739.3Q982.0 747.1 985.8 739.3M978.2 747.0Q982.0 739.2 985.8 747.0M996.2 739.3Q1000.0 747.1 1003.8 739.3M996.2 747.0Q1000.0 739.2 1003.8 747.0M1014.2 739.3Q1018.0 747.1 1021.8 739.3M1014.2 747.0Q1018.0 739.2 1021.8 747.0M1032.2 739.3Q1036.0 747.1 1039.8 739.3M1032.2 747.0Q1036.0 739.2 1039.8 747.0M1050.2 739.3Q1054.0 747.1 1057.8 739.3M1050.2 747.0Q1054.0 739.2 1057.8 747.0M1068.2 739.3Q1072.0 747.1 1075.8 739.3M1068.2 747.0Q1072.0 739.2 1075.8 747.0M1086.2 739.3Q1090.0 747.1 1093.8 739.3M1086.2 747.0Q1090.0 739.2 1093.8 747.0M1104.2 739.3Q1108.0 747.1 1111.8 739.3M1104.2 747.0Q1108.0 739.2 1111.8 747.0M1122.2 739.3Q1126.0 747.1 1129.8 739.3M1122.2 747.0Q1126.0 739.2 1129.8 747.0M1140.2 739.3Q1144.0 747.1 1147.8 739.3M1140.2 747.0Q1144.0 739.2 1147.8 747.0M1158.2 739.3Q1162.0 747.1 1165.8 739.3M1158.2 747.0Q1162.0 739.2 1165.8 747.0M1176.2 739.3Q1180.0 747.1 1183.8 739.3M1176.2 747.0Q1180.0 739.2 1183.8 747.0M1194.2 739.3Q1198.0 747.1 1201.8 739.3M1194.2 747.0Q1198.0 739.2 1201.8 747.0M1212.2 739.3Q1216.0 747.1 1219.8 739.3M1212.2 747.0Q1216.0 739.2 1219.8 747.0M1230.2 739.3Q1234.0 747.1 1237.8 739.3M1230.2 747.0Q1234.0 739.2 1237.8 747.0M1248.2 739.3Q1252.0 747.1 1255.8 739.3M1248.2 747.0Q1252.0 739.2 1255.8 747.0M1266.2 739.3Q1270.0 747.1 1273.8 739.3M1266.2 747.0Q1270.0 739.2 1273.8 747.0M1284.2 739.3Q1288.0 747.1 1291.8 739.3M1284.2 747.0Q1288.0 739.2 1291.8 747.0M1302.2 739.3Q1306.0 747.1 1309.8 739.3M1302.2 747.0Q1306.0 739.2 1309.8 747.0M1320.2 739.3Q1324.0 747.1 1327.8 739.3M1320.2 747.0Q1324.0 739.2 1327.8 747.0M1338.2 739.3Q1342.0 747.1 1345.8 739.3M1338.2 747.0Q1342.0 739.2 1345.8 747.0M1356.2 739.3Q1360.0 747.1 1363.8 739.3M1356.2 747.0Q1360.0 739.2 1363.8 747.0M1374.2 739.3Q1378.0 747.1 1381.8 739.3M1374.2 747.0Q1378.0 739.2 1381.8 747.0M1392.2 739.3Q1396.0 747.1 1399.8 739.3M1392.2 747.0Q1396.0 739.2 1399.8 747.0M1410.2 739.3Q1414.0 747.1 1417.8 739.3M1410.2 747.0Q1414.0 739.2 1417.8 747.0M1428.2 739.3Q1432.0 747.1 1435.8 739.3M1428.2 747.0Q1432.0 739.2 1435.8 747.0M1446.2 739.3Q1450.0 747.1 1453.8 739.3M1446.2 747.0Q1450.0 739.2 1453.8 747.0M1464.2 739.3Q1468.0 747.1 1471.8 739.3M1464.2 747.0Q1468.0 739.2 1471.8 747.0M1482.2 739.3Q1486.0 747.1 1489.8 739.3M1482.2 747.0Q1486.0 739.2 1489.8 747.0M1500.2 739.3Q1504.0 747.1 1507.8 739.3M1500.2 747.0Q1504.0 739.2 1507.8 747.0M1518.2 739.3Q1522.0 747.1 1525.8 739.3M1518.2 747.0Q1522.0 739.2 1525.8 747.0M1536.2 739.3Q1540.0 747.1 1543.8 739.3M1536.2 747.0Q1540.0 739.2 1543.8 747.0M1554.2 739.3Q1558.0 747.1 1561.8 739.3M1554.2 747.0Q1558.0 739.2 1561.8 747.0M1572.2 739.3Q1576.0 747.1 1579.8 739.3M1572.2 747.0Q1576.0 739.2 1579.8 747.0M1590.2 739.3Q1594.0 747.1 1597.8 739.3M1590.2 747.0Q1594.0 739.2 1597.8 747.0M1608.2 739.3Q1612.0 747.1 1615.8 739.3M1608.2 747.0Q1612.0 739.2 1615.8 747.0M1626.2 739.3Q1630.0 747.1 1633.8 739.3M1626.2 747.0Q1630.0 739.2 1633.8 747.0M1644.2 739.3Q1648.0 747.1 1651.8 739.3M1644.2 747.0Q1648.0 739.2 1651.8 747.0M1662.2 739.3Q1666.0 747.1 1669.8 739.3M1662.2 747.0Q1666.0 739.2 1669.8 747.0M1680.2 739.3Q1684.0 747.1 1687.8 739.3M1680.2 747.0Q1684.0 739.2 1687.8 747.0M1698.2 739.3Q1702.0 747.1 1705.8 739.3M1698.2 747.0Q1702.0 739.2 1705.8 747.0M1716.2 739.3Q1720.0 747.1 1723.8 739.3M1716.2 747.0Q1720.0 739.2 1723.8 747.0M1734.2 739.3Q1738.0 747.1 1741.8 739.3M1734.2 747.0Q1738.0 739.2 1741.8 747.0M1752.2 739.3Q1756.0 747.1 1759.8 739.3M1752.2 747.0Q1756.0 739.2 1759.8 747.0" fill="none" stroke="#969696" stroke-width="1"/><rect x="720.70" y="905.50" width="1054.60" height="10" rx="5" fill="#efefef" stroke="#000" stroke-width="1.4"/><line x1="723" y1="911.00" x2="1773" y2="911.00" stroke="#c4c4c4" stroke-width="0.8"/><path d="M728.2 907.1Q732.0 914.9 735.8 907.1M728.2 914.8Q732.0 907.0 735.8 914.8M746.2 907.1Q750.0 914.9 753.8 907.1M746.2 914.8Q750.0 907.0 753.8 914.8M764.2 907.1Q768.0 914.9 771.8 907.1M764.2 914.8Q768.0 907.0 771.8 914.8M782.2 907.1Q786.0 914.9 789.8 907.1M782.2 914.8Q786.0 907.0 789.8 914.8M800.2 907.1Q804.0 914.9 807.8 907.1M800.2 914.8Q804.0 907.0 807.8 914.8M818.2 907.1Q822.0 914.9 825.8 907.1M818.2 914.8Q822.0 907.0 825.8 914.8M836.2 907.1Q840.0 914.9 843.8 907.1M836.2 914.8Q840.0 907.0 843.8 914.8M854.2 907.1Q858.0 914.9 861.8 907.1M854.2 914.8Q858.0 907.0 861.8 914.8M872.2 907.1Q876.0 914.9 879.8 907.1M872.2 914.8Q876.0 907.0 879.8 914.8M890.2 907.1Q894.0 914.9 897.8 907.1M890.2 914.8Q894.0 907.0 897.8 914.8M908.2 907.1Q912.0 914.9 915.8 907.1M908.2 914.8Q912.0 907.0 915.8 914.8M926.2 907.1Q930.0 914.9 933.8 907.1M926.2 914.8Q930.0 907.0 933.8 914.8M944.2 907.1Q948.0 914.9 951.8 907.1M944.2 914.8Q948.0 907.0 951.8 914.8M962.2 907.1Q966.0 914.9 969.8 907.1M962.2 914.8Q966.0 907.0 969.8 914.8M980.2 907.1Q984.0 914.9 987.8 907.1M980.2 914.8Q984.0 907.0 987.8 914.8M998.2 907.1Q1002.0 914.9 1005.8 907.1M998.2 914.8Q1002.0 907.0 1005.8 914.8M1016.2 907.1Q1020.0 914.9 1023.8 907.1M1016.2 914.8Q1020.0 907.0 1023.8 914.8M1034.2 907.1Q1038.0 914.9 1041.8 907.1M1034.2 914.8Q1038.0 907.0 1041.8 914.8M1052.2 907.1Q1056.0 914.9 1059.8 907.1M1052.2 914.8Q1056.0 907.0 1059.8 914.8M1070.2 907.1Q1074.0 914.9 1077.8 907.1M1070.2 914.8Q1074.0 907.0 1077.8 914.8M1088.2 907.1Q1092.0 914.9 1095.8 907.1M1088.2 914.8Q1092.0 907.0 1095.8 914.8M1106.2 907.1Q1110.0 914.9 1113.8 907.1M1106.2 914.8Q1110.0 907.0 1113.8 914.8M1124.2 907.1Q1128.0 914.9 1131.8 907.1M1124.2 914.8Q1128.0 907.0 1131.8 914.8M1142.2 907.1Q1146.0 914.9 1149.8 907.1M1142.2 914.8Q1146.0 907.0 1149.8 914.8M1160.2 907.1Q1164.0 914.9 1167.8 907.1M1160.2 914.8Q1164.0 907.0 1167.8 914.8M1178.2 907.1Q1182.0 914.9 1185.8 907.1M1178.2 914.8Q1182.0 907.0 1185.8 914.8M1196.2 907.1Q1200.0 914.9 1203.8 907.1M1196.2 914.8Q1200.0 907.0 1203.8 914.8M1214.2 907.1Q1218.0 914.9 1221.8 907.1M1214.2 914.8Q1218.0 907.0 1221.8 914.8M1232.2 907.1Q1236.0 914.9 1239.8 907.1M1232.2 914.8Q1236.0 907.0 1239.8 914.8M1250.2 907.1Q1254.0 914.9 1257.8 907.1M1250.2 914.8Q1254.0 907.0 1257.8 914.8M1268.2 907.1Q1272.0 914.9 1275.8 907.1M1268.2 914.8Q1272.0 907.0 1275.8 914.8M1286.2 907.1Q1290.0 914.9 1293.8 907.1M1286.2 914.8Q1290.0 907.0 1293.8 914.8M1304.2 907.1Q1308.0 914.9 1311.8 907.1M1304.2 914.8Q1308.0 907.0 1311.8 914.8M1322.2 907.1Q1326.0 914.9 1329.8 907.1M1322.2 914.8Q1326.0 907.0 1329.8 914.8M1340.2 907.1Q1344.0 914.9 1347.8 907.1M1340.2 914.8Q1344.0 907.0 1347.8 914.8M1358.2 907.1Q1362.0 914.9 1365.8 907.1M1358.2 914.8Q1362.0 907.0 1365.8 914.8M1376.2 907.1Q1380.0 914.9 1383.8 907.1M1376.2 914.8Q1380.0 907.0 1383.8 914.8M1394.2 907.1Q1398.0 914.9 1401.8 907.1M1394.2 914.8Q1398.0 907.0 1401.8 914.8M1412.2 907.1Q1416.0 914.9 1419.8 907.1M1412.2 914.8Q1416.0 907.0 1419.8 914.8M1430.2 907.1Q1434.0 914.9 1437.8 907.1M1430.2 914.8Q1434.0 907.0 1437.8 914.8M1448.2 907.1Q1452.0 914.9 1455.8 907.1M1448.2 914.8Q1452.0 907.0 1455.8 914.8M1466.2 907.1Q1470.0 914.9 1473.8 907.1M1466.2 914.8Q1470.0 907.0 1473.8 914.8M1484.2 907.1Q1488.0 914.9 1491.8 907.1M1484.2 914.8Q1488.0 907.0 1491.8 914.8M1502.2 907.1Q1506.0 914.9 1509.8 907.1M1502.2 914.8Q1506.0 907.0 1509.8 914.8M1520.2 907.1Q1524.0 914.9 1527.8 907.1M1520.2 914.8Q1524.0 907.0 1527.8 914.8M1538.2 907.1Q1542.0 914.9 1545.8 907.1M1538.2 914.8Q1542.0 907.0 1545.8 914.8M1556.2 907.1Q1560.0 914.9 1563.8 907.1M1556.2 914.8Q1560.0 907.0 1563.8 914.8M1574.2 907.1Q1578.0 914.9 1581.8 907.1M1574.2 914.8Q1578.0 907.0 1581.8 914.8M1592.2 907.1Q1596.0 914.9 1599.8 907.1M1592.2 914.8Q1596.0 907.0 1599.8 914.8M1610.2 907.1Q1614.0 914.9 1617.8 907.1M1610.2 914.8Q1614.0 907.0 1617.8 914.8M1628.2 907.1Q1632.0 914.9 1635.8 907.1M1628.2 914.8Q1632.0 907.0 1635.8 914.8M1646.2 907.1Q1650.0 914.9 1653.8 907.1M1646.2 914.8Q1650.0 907.0 1653.8 914.8M1664.2 907.1Q1668.0 914.9 1671.8 907.1M1664.2 914.8Q1668.0 907.0 1671.8 914.8M1682.2 907.1Q1686.0 914.9 1689.8 907.1M1682.2 914.8Q1686.0 907.0 1689.8 914.8M1700.2 907.1Q1704.0 914.9 1707.8 907.1M1700.2 914.8Q1704.0 907.0 1707.8 914.8M1718.2 907.1Q1722.0 914.9 1725.8 907.1M1718.2 914.8Q1722.0 907.0 1725.8 914.8M1736.2 907.1Q1740.0 914.9 1743.8 907.1M1736.2 914.8Q1740.0 907.0 1743.8 914.8M1754.2 907.1Q1758.0 914.9 1761.8 907.1M1754.2 914.8Q1758.0 907.0 1761.8 914.8" fill="none" stroke="#969696" stroke-width="1"/><rect x="732.60" y="410.70" width="10" height="284.60" rx="5" fill="#efefef" stroke="#000" stroke-width="1.4"/><path d="M734.2 417.6L741.0 424.4M741.0 417.6L734.2 424.4M734.2 435.4L741.0 442.2M741.0 435.4L734.2 442.2M734.2 453.2L741.0 460.0M741.0 453.2L734.2 460.0M734.2 471.0L741.0 477.8M741.0 471.0L734.2 477.8M734.2 488.8L741.0 495.6M741.0 488.8L734.2 495.6M734.2 506.6L741.0 513.4M741.0 506.6L734.2 513.4M734.2 524.4L741.0 531.2M741.0 524.4L734.2 531.2M734.2 542.2L741.0 549.0M741.0 542.2L734.2 549.0M734.2 560.0L741.0 566.8M741.0 560.0L734.2 566.8M734.2 577.8L741.0 584.6M741.0 577.8L734.2 584.6M734.2 595.6L741.0 602.4M741.0 595.6L734.2 602.4M734.2 613.4L741.0 620.2M741.0 613.4L734.2 620.2M734.2 631.2L741.0 638.0M741.0 631.2L734.2 638.0M734.2 649.0L741.0 655.8M741.0 649.0L734.2 655.8M734.2 666.8L741.0 673.6M741.0 666.8L734.2 673.6M734.2 684.6L741.0 691.4M741.0 684.6L734.2 691.4" fill="none" stroke="#999" stroke-width="0.9"/><rect x="1753.40" y="410.70" width="10" height="285.60" rx="5" fill="#efefef" stroke="#000" stroke-width="1.4"/><path d="M1755.0 417.6L1761.8 424.4M1761.8 417.6L1755.0 424.4M1755.0 435.4L1761.8 442.2M1761.8 435.4L1755.0 442.2M1755.0 453.2L1761.8 460.0M1761.8 453.2L1755.0 460.0M1755.0 471.0L1761.8 477.8M1761.8 471.0L1755.0 477.8M1755.0 488.8L1761.8 495.6M1761.8 488.8L1755.0 495.6M1755.0 506.6L1761.8 513.4M1761.8 506.6L1755.0 513.4M1755.0 524.4L1761.8 531.2M1761.8 524.4L1755.0 531.2M1755.0 542.2L1761.8 549.0M1761.8 542.2L1755.0 549.0M1755.0 560.0L1761.8 566.8M1761.8 560.0L1755.0 566.8M1755.0 577.8L1761.8 584.6M1761.8 577.8L1755.0 584.6M1755.0 595.6L1761.8 602.4M1761.8 595.6L1755.0 602.4M1755.0 613.4L1761.8 620.2M1761.8 613.4L1755.0 620.2M1755.0 631.2L1761.8 638.0M1761.8 631.2L1755.0 638.0M1755.0 649.0L1761.8 655.8M1761.8 649.0L1755.0 655.8M1755.0 666.8L1761.8 673.6M1761.8 666.8L1755.0 673.6M1755.0 684.6L1761.8 691.4M1761.8 684.6L1755.0 691.4" fill="none" stroke="#999" stroke-width="0.9"/><rect x="720.1" y="96.5" width="1056" height="704" rx="14" fill="none" stroke="#000" stroke-width="3.1"/><text x="1762.40" y="122.90" font-size="11" font-weight="700" fill="#666" text-anchor="middle" >N</text><text x="1790.80" y="188.60" font-size="12" font-weight="700" fill="#111" text-anchor="start" >LX 4</text><text x="1790.70" y="408.70" font-size="12" font-weight="700" fill="#111" text-anchor="start" >LX 3</text><text x="1788.60" y="746.70" font-size="12" font-weight="700" fill="#111" text-anchor="start" >LX 2</text><text x="1790.60" y="914.40" font-size="12" font-weight="700" fill="#111" text-anchor="start" >Front</text><text x="751.40" y="698.50" font-size="12.3" font-weight="700" fill="#111" text-anchor="start" >Side Truss Left</text><text x="1772.70" y="700.80" font-size="12" font-weight="700" fill="#111" text-anchor="start" >Side Truss Right</text><rect x="795.20" y="171.50" width="25.6" height="25.6" rx="6.5" fill="rgba(200,200,200,0.3)"/><circle cx="807.60" cy="181.30" r="7.6" fill="rgba(240,194,234,0.9)" stroke="#a88aa4" stroke-width="0.9"/><rect x="795.80" y="192.10" width="24.4" height="8.7" rx="4" fill="rgba(246,210,240,0.85)" stroke="#b894b2" stroke-width="0.8"/><rect x="795.20" y="171.50" width="25.6" height="25.6" rx="6.5" fill="none" stroke="#151515" stroke-width="1.45"/><line x1="808.0" y1="183.10" x2="808.0" y2="192.30" stroke="#2f9bff" stroke-width="2.6" stroke-linecap="round"/><path d="M804.50 189.30Q808.00 190.50 811.50 189.30L808.00 196.80Z" fill="#2f9bff"/><circle cx="831.20" cy="169.30" r="2" fill="#e45ed6"/><circle cx="825.80" cy="175.10" r="2" fill="#e45ed6"/><circle cx="831.20" cy="175.10" r="2" fill="#e45ed6"/><text x="808.00" y="167.80" font-size="11" font-weight="700" fill="#111" text-anchor="middle" stroke="#111" stroke-width="0.3">Pointe</text><text x="808.00" y="211.00" font-size="9.6" font-weight="700" fill="#333" text-anchor="middle" letter-spacing="0.25" stroke="#333" stroke-width="0.2">4.1</text><circle cx="808.00" cy="225.90" r="11.6" fill="rgba(228,228,228,0.6)" stroke="#707070" stroke-width="1.15"/><text x="808.00" y="229.00" font-size="9.8" font-weight="700" fill="#000" text-anchor="middle" letter-spacing="0.1" stroke="#000" stroke-width="0.3">501</text><rect x="858.06" y="171.50" width="25.6" height="25.6" rx="6.5" fill="rgba(200,200,200,0.3)"/><circle cx="870.86" cy="181.70" r="8.8" fill="rgba(222,210,232,0.85)" stroke="#a898b4" stroke-width="0.8"/><circle cx="870.86" cy="181.70" r="6.4" fill="none" stroke="#9f8ab0" stroke-width="0.8"/><circle cx="870.86" cy="181.70" r="4.4" fill="#c6a8dc" stroke="#9a80b0" stroke-width="0.7"/><rect x="856.06" y="192.30" width="29.4" height="8.5" rx="4" fill="rgba(234,222,240,0.9)" stroke="#a897b2" stroke-width="0.8"/><rect x="858.06" y="171.50" width="25.6" height="25.6" rx="6.5" fill="none" stroke="#151515" stroke-width="1.45"/><line x1="870.8571428571429" y1="183.10" x2="870.8571428571429" y2="192.30" stroke="#2f9bff" stroke-width="2.6" stroke-linecap="round"/><path d="M867.36 189.30Q870.86 190.50 874.36 189.30L870.86 196.80Z" fill="#2f9bff"/><circle cx="888.86" cy="175.10" r="2" fill="#a35fc4"/><circle cx="894.16" cy="175.10" r="2" fill="#a35fc4"/><text x="870.86" y="167.80" font-size="11" font-weight="700" fill="#111" text-anchor="middle" stroke="#111" stroke-width="0.3">Wash 10K</text><text x="870.86" y="211.00" font-size="9.6" font-weight="700" fill="#333" text-anchor="middle" letter-spacing="0.25" stroke="#333" stroke-width="0.2">4.193</text><circle cx="870.86" cy="225.90" r="11.6" fill="rgba(228,228,228,0.6)" stroke="#707070" stroke-width="1.15"/><text x="870.86" y="229.00" font-size="9.8" font-weight="700" fill="#000" text-anchor="middle" letter-spacing="0.1" stroke="#000" stroke-width="0.3">601</text><rect x="920.91" y="171.50" width="25.6" height="25.6" rx="6.5" fill="rgba(200,200,200,0.3)"/><circle cx="933.31" cy="181.30" r="7.6" fill="rgba(240,194,234,0.9)" stroke="#a88aa4" stroke-width="0.9"/><rect x="921.51" y="192.10" width="24.4" height="8.7" rx="4" fill="rgba(246,210,240,0.85)" stroke="#b894b2" stroke-width="0.8"/><rect x="920.91" y="171.50" width="25.6" height="25.6" rx="6.5" fill="none" stroke="#151515" stroke-width="1.45"/><line x1="933.7142857142857" y1="183.10" x2="933.7142857142857" y2="192.30" stroke="#2f9bff" stroke-width="2.6" stroke-linecap="round"/><path d="M930.21 189.30Q933.71 190.50 937.21 189.30L933.71 196.80Z" fill="#2f9bff"/><circle cx="956.91" cy="169.30" r="2" fill="#e45ed6"/><circle cx="951.51" cy="175.10" r="2" fill="#e45ed6"/><circle cx="956.91" cy="175.10" r="2" fill="#e45ed6"/><text x="933.71" y="167.80" font-size="11" font-weight="700" fill="#111" text-anchor="middle" stroke="#111" stroke-width="0.3">Pointe</text><text x="933.71" y="211.00" font-size="9.6" font-weight="700" fill="#333" text-anchor="middle" letter-spacing="0.25" stroke="#333" stroke-width="0.2">4.25</text><circle cx="933.71" cy="225.90" r="11.6" fill="rgba(228,228,228,0.6)" stroke="#707070" stroke-width="1.15"/><text x="933.71" y="229.00" font-size="9.8" font-weight="700" fill="#000" text-anchor="middle" letter-spacing="0.1" stroke="#000" stroke-width="0.3">502</text><rect x="983.77" y="171.50" width="25.6" height="25.6" rx="6.5" fill="rgba(200,200,200,0.3)"/><circle cx="996.57" cy="181.70" r="8.8" fill="rgba(222,210,232,0.85)" stroke="#a898b4" stroke-width="0.8"/><circle cx="996.57" cy="181.70" r="6.4" fill="none" stroke="#9f8ab0" stroke-width="0.8"/><circle cx="996.57" cy="181.70" r="4.4" fill="#c6a8dc" stroke="#9a80b0" stroke-width="0.7"/><rect x="981.77" y="192.30" width="29.4" height="8.5" rx="4" fill="rgba(234,222,240,0.9)" stroke="#a897b2" stroke-width="0.8"/><rect x="983.77" y="171.50" width="25.6" height="25.6" rx="6.5" fill="none" stroke="#151515" stroke-width="1.45"/><line x1="996.5714285714286" y1="183.10" x2="996.5714285714286" y2="192.30" stroke="#2f9bff" stroke-width="2.6" stroke-linecap="round"/><path d="M993.07 189.30Q996.57 190.50 1000.07 189.30L996.57 196.80Z" fill="#2f9bff"/><circle cx="1014.57" cy="175.10" r="2" fill="#a35fc4"/><circle cx="1019.87" cy="175.10" r="2" fill="#a35fc4"/><text x="996.57" y="167.80" font-size="11" font-weight="700" fill="#111" text-anchor="middle" stroke="#111" stroke-width="0.3">Wash 10K</text><text x="996.57" y="211.00" font-size="9.6" font-weight="700" fill="#333" text-anchor="middle" letter-spacing="0.25" stroke="#333" stroke-width="0.2">4.226</text><circle cx="996.57" cy="225.90" r="11.6" fill="rgba(228,228,228,0.6)" stroke="#707070" stroke-width="1.15"/><text x="996.57" y="229.00" font-size="9.8" font-weight="700" fill="#000" text-anchor="middle" letter-spacing="0.1" stroke="#000" stroke-width="0.3">602</text><rect x="1046.63" y="171.50" width="25.6" height="25.6" rx="6.5" fill="rgba(200,200,200,0.3)"/><circle cx="1059.03" cy="181.30" r="7.6" fill="rgba(240,194,234,0.9)" stroke="#a88aa4" stroke-width="0.9"/><rect x="1047.23" y="192.10" width="24.4" height="8.7" rx="4" fill="rgba(246,210,240,0.85)" stroke="#b894b2" stroke-width="0.8"/><rect x="1046.63" y="171.50" width="25.6" height="25.6" rx="6.5" fill="none" stroke="#151515" stroke-width="1.45"/><line x1="1059.4285714285713" y1="183.10" x2="1059.4285714285713" y2="192.30" stroke="#2f9bff" stroke-width="2.6" stroke-linecap="round"/><path d="M1055.93 189.30Q1059.43 190.50 1062.93 189.30L1059.43 196.80Z" fill="#2f9bff"/><circle cx="1082.63" cy="169.30" r="2" fill="#e45ed6"/><circle cx="1077.23" cy="175.10" r="2" fill="#e45ed6"/><circle cx="1082.63" cy="175.10" r="2" fill="#e45ed6"/><text x="1059.43" y="167.80" font-size="11" font-weight="700" fill="#111" text-anchor="middle" stroke="#111" stroke-width="0.3">Pointe</text><text x="1059.43" y="211.00" font-size="9.6" font-weight="700" fill="#333" text-anchor="middle" letter-spacing="0.25" stroke="#333" stroke-width="0.2">4.49</text><circle cx="1059.43" cy="225.90" r="11.6" fill="rgba(228,228,228,0.6)" stroke="#707070" stroke-width="1.15"/><text x="1059.43" y="229.00" font-size="9.8" font-weight="700" fill="#000" text-anchor="middle" letter-spacing="0.1" stroke="#000" stroke-width="0.3">503</text><rect x="1109.49" y="171.50" width="25.6" height="25.6" rx="6.5" fill="rgba(200,200,200,0.3)"/><circle cx="1122.29" cy="181.70" r="8.8" fill="rgba(222,210,232,0.85)" stroke="#a898b4" stroke-width="0.8"/><circle cx="1122.29" cy="181.70" r="6.4" fill="none" stroke="#9f8ab0" stroke-width="0.8"/><circle cx="1122.29" cy="181.70" r="4.4" fill="#c6a8dc" stroke="#9a80b0" stroke-width="0.7"/><rect x="1107.49" y="192.30" width="29.4" height="8.5" rx="4" fill="rgba(234,222,240,0.9)" stroke="#a897b2" stroke-width="0.8"/><rect x="1109.49" y="171.50" width="25.6" height="25.6" rx="6.5" fill="none" stroke="#151515" stroke-width="1.45"/><line x1="1122.2857142857142" y1="183.10" x2="1122.2857142857142" y2="192.30" stroke="#2f9bff" stroke-width="2.6" stroke-linecap="round"/><path d="M1118.79 189.30Q1122.29 190.50 1125.79 189.30L1122.29 196.80Z" fill="#2f9bff"/><circle cx="1140.29" cy="175.10" r="2" fill="#a35fc4"/><circle cx="1145.59" cy="175.10" r="2" fill="#a35fc4"/><text x="1122.29" y="167.80" font-size="11" font-weight="700" fill="#111" text-anchor="middle" stroke="#111" stroke-width="0.3">Wash 10K</text><text x="1122.29" y="211.00" font-size="9.6" font-weight="700" fill="#333" text-anchor="middle" letter-spacing="0.25" stroke="#333" stroke-width="0.2">4.259</text><circle cx="1122.29" cy="225.90" r="11.6" fill="rgba(228,228,228,0.6)" stroke="#707070" stroke-width="1.15"/><text x="1122.29" y="229.00" font-size="9.8" font-weight="700" fill="#000" text-anchor="middle" letter-spacing="0.1" stroke="#000" stroke-width="0.3">603</text><rect x="1172.34" y="171.50" width="25.6" height="25.6" rx="6.5" fill="rgba(200,200,200,0.3)"/><circle cx="1184.74" cy="181.30" r="7.6" fill="rgba(240,194,234,0.9)" stroke="#a88aa4" stroke-width="0.9"/><rect x="1172.94" y="192.10" width="24.4" height="8.7" rx="4" fill="rgba(246,210,240,0.85)" stroke="#b894b2" stroke-width="0.8"/><rect x="1172.34" y="171.50" width="25.6" height="25.6" rx="6.5" fill="none" stroke="#151515" stroke-width="1.45"/><line x1="1185.142857142857" y1="183.10" x2="1185.142857142857" y2="192.30" stroke="#2f9bff" stroke-width="2.6" stroke-linecap="round"/><path d="M1181.64 189.30Q1185.14 190.50 1188.64 189.30L1185.14 196.80Z" fill="#2f9bff"/><circle cx="1208.34" cy="169.30" r="2" fill="#e45ed6"/><circle cx="1202.94" cy="175.10" r="2" fill="#e45ed6"/><circle cx="1208.34" cy="175.10" r="2" fill="#e45ed6"/><text x="1185.14" y="167.80" font-size="11" font-weight="700" fill="#111" text-anchor="middle" stroke="#111" stroke-width="0.3">Pointe</text><text x="1185.14" y="211.00" font-size="9.6" font-weight="700" fill="#333" text-anchor="middle" letter-spacing="0.25" stroke="#333" stroke-width="0.2">4.73</text><circle cx="1185.14" cy="225.90" r="11.6" fill="rgba(228,228,228,0.6)" stroke="#707070" stroke-width="1.15"/><text x="1185.14" y="229.00" font-size="9.8" font-weight="700" fill="#000" text-anchor="middle" letter-spacing="0.1" stroke="#000" stroke-width="0.3">504</text><rect x="1235.20" y="171.50" width="25.6" height="25.6" rx="6.5" fill="rgba(200,200,200,0.3)"/><rect x="1254.50" y="178.70" width="12.5" height="10.6" rx="3.5" fill="rgba(212,212,212,0.85)" stroke="#6a6a6a" stroke-width="0.8"/><rect x="1236.00" y="178.70" width="19.3" height="10.8" rx="3" fill="rgba(200,200,200,0.9)" stroke="#222" stroke-width="1.1"/><circle cx="1240.40" cy="193.00" r="1.5" fill="#444"/><rect x="1235.20" y="171.50" width="25.6" height="25.6" rx="6.5" fill="none" stroke="#151515" stroke-width="1.45"/><line x1="1248.0" y1="183.10" x2="1248.0" y2="192.30" stroke="#2f9bff" stroke-width="2.6" stroke-linecap="round"/><path d="M1244.50 189.30Q1248.00 190.50 1251.50 189.30L1248.00 196.80Z" fill="#2f9bff"/><text x="1248.00" y="167.80" font-size="11" font-weight="700" fill="#111" text-anchor="middle" stroke="#111" stroke-width="0.3">Drums Back</text><text x="1248.00" y="211.00" font-size="9.6" font-weight="700" fill="#333" text-anchor="middle" letter-spacing="0.25" stroke="#333" stroke-width="0.2">4.292</text><circle cx="1248.00" cy="225.90" r="11.6" fill="rgba(228,228,228,0.6)" stroke="#707070" stroke-width="1.15"/><text x="1248.00" y="229.00" font-size="9.8" font-weight="700" fill="#000" text-anchor="middle" letter-spacing="0.1" stroke="#000" stroke-width="0.3">407</text><rect x="1298.06" y="171.50" width="25.6" height="25.6" rx="6.5" fill="rgba(200,200,200,0.3)"/><circle cx="1310.46" cy="181.30" r="7.6" fill="rgba(240,194,234,0.9)" stroke="#a88aa4" stroke-width="0.9"/><rect x="1298.66" y="192.10" width="24.4" height="8.7" rx="4" fill="rgba(246,210,240,0.85)" stroke="#b894b2" stroke-width="0.8"/><rect x="1298.06" y="171.50" width="25.6" height="25.6" rx="6.5" fill="none" stroke="#151515" stroke-width="1.45"/><line x1="1310.857142857143" y1="183.10" x2="1310.857142857143" y2="192.30" stroke="#2f9bff" stroke-width="2.6" stroke-linecap="round"/><path d="M1307.36 189.30Q1310.86 190.50 1314.36 189.30L1310.86 196.80Z" fill="#2f9bff"/><circle cx="1334.06" cy="169.30" r="2" fill="#e45ed6"/><circle cx="1328.66" cy="175.10" r="2" fill="#e45ed6"/><circle cx="1334.06" cy="175.10" r="2" fill="#e45ed6"/><text x="1310.86" y="167.80" font-size="11" font-weight="700" fill="#111" text-anchor="middle" stroke="#111" stroke-width="0.3">Pointe</text><text x="1310.86" y="211.00" font-size="9.6" font-weight="700" fill="#333" text-anchor="middle" letter-spacing="0.25" stroke="#333" stroke-width="0.2">4.97</text><circle cx="1310.86" cy="225.90" r="11.6" fill="rgba(228,228,228,0.6)" stroke="#707070" stroke-width="1.15"/><text x="1310.86" y="229.00" font-size="9.8" font-weight="700" fill="#000" text-anchor="middle" letter-spacing="0.1" stroke="#000" stroke-width="0.3">505</text><rect x="1360.91" y="171.50" width="25.6" height="25.6" rx="6.5" fill="rgba(200,200,200,0.3)"/><circle cx="1373.71" cy="181.70" r="8.8" fill="rgba(222,210,232,0.85)" stroke="#a898b4" stroke-width="0.8"/><circle cx="1373.71" cy="181.70" r="6.4" fill="none" stroke="#9f8ab0" stroke-width="0.8"/><circle cx="1373.71" cy="181.70" r="4.4" fill="#c6a8dc" stroke="#9a80b0" stroke-width="0.7"/><rect x="1358.91" y="192.30" width="29.4" height="8.5" rx="4" fill="rgba(234,222,240,0.9)" stroke="#a897b2" stroke-width="0.8"/><rect x="1360.91" y="171.50" width="25.6" height="25.6" rx="6.5" fill="none" stroke="#151515" stroke-width="1.45"/><line x1="1373.7142857142858" y1="183.10" x2="1373.7142857142858" y2="192.30" stroke="#2f9bff" stroke-width="2.6" stroke-linecap="round"/><path d="M1370.21 189.30Q1373.71 190.50 1377.21 189.30L1373.71 196.80Z" fill="#2f9bff"/><circle cx="1391.71" cy="175.10" r="2" fill="#a35fc4"/><circle cx="1397.01" cy="175.10" r="2" fill="#a35fc4"/><text x="1373.71" y="167.80" font-size="11" font-weight="700" fill="#111" text-anchor="middle" stroke="#111" stroke-width="0.3">Wash 10K</text><text x="1373.71" y="211.00" font-size="9.6" font-weight="700" fill="#333" text-anchor="middle" letter-spacing="0.25" stroke="#333" stroke-width="0.2">4.325</text><circle cx="1373.71" cy="225.90" r="11.6" fill="rgba(228,228,228,0.6)" stroke="#707070" stroke-width="1.15"/><text x="1373.71" y="229.00" font-size="9.8" font-weight="700" fill="#000" text-anchor="middle" letter-spacing="0.1" stroke="#000" stroke-width="0.3">604</text><rect x="1423.77" y="171.50" width="25.6" height="25.6" rx="6.5" fill="rgba(200,200,200,0.3)"/><circle cx="1436.17" cy="181.30" r="7.6" fill="rgba(240,194,234,0.9)" stroke="#a88aa4" stroke-width="0.9"/><rect x="1424.37" y="192.10" width="24.4" height="8.7" rx="4" fill="rgba(246,210,240,0.85)" stroke="#b894b2" stroke-width="0.8"/><rect x="1423.77" y="171.50" width="25.6" height="25.6" rx="6.5" fill="none" stroke="#151515" stroke-width="1.45"/><line x1="1436.5714285714284" y1="183.10" x2="1436.5714285714284" y2="192.30" stroke="#2f9bff" stroke-width="2.6" stroke-linecap="round"/><path d="M1433.07 189.30Q1436.57 190.50 1440.07 189.30L1436.57 196.80Z" fill="#2f9bff"/><circle cx="1459.77" cy="169.30" r="2" fill="#e45ed6"/><circle cx="1454.37" cy="175.10" r="2" fill="#e45ed6"/><circle cx="1459.77" cy="175.10" r="2" fill="#e45ed6"/><text x="1436.57" y="167.80" font-size="11" font-weight="700" fill="#111" text-anchor="middle" stroke="#111" stroke-width="0.3">Pointe</text><text x="1436.57" y="211.00" font-size="9.6" font-weight="700" fill="#333" text-anchor="middle" letter-spacing="0.25" stroke="#333" stroke-width="0.2">4.121</text><circle cx="1436.57" cy="225.90" r="11.6" fill="rgba(228,228,228,0.6)" stroke="#707070" stroke-width="1.15"/><text x="1436.57" y="229.00" font-size="9.8" font-weight="700" fill="#000" text-anchor="middle" letter-spacing="0.1" stroke="#000" stroke-width="0.3">506</text><rect x="1486.63" y="171.50" width="25.6" height="25.6" rx="6.5" fill="rgba(200,200,200,0.3)"/><circle cx="1499.43" cy="181.70" r="8.8" fill="rgba(222,210,232,0.85)" stroke="#a898b4" stroke-width="0.8"/><circle cx="1499.43" cy="181.70" r="6.4" fill="none" stroke="#9f8ab0" stroke-width="0.8"/><circle cx="1499.43" cy="181.70" r="4.4" fill="#c6a8dc" stroke="#9a80b0" stroke-width="0.7"/><rect x="1484.63" y="192.30" width="29.4" height="8.5" rx="4" fill="rgba(234,222,240,0.9)" stroke="#a897b2" stroke-width="0.8"/><rect x="1486.63" y="171.50" width="25.6" height="25.6" rx="6.5" fill="none" stroke="#151515" stroke-width="1.45"/><line x1="1499.4285714285716" y1="183.10" x2="1499.4285714285716" y2="192.30" stroke="#2f9bff" stroke-width="2.6" stroke-linecap="round"/><path d="M1495.93 189.30Q1499.43 190.50 1502.93 189.30L1499.43 196.80Z" fill="#2f9bff"/><circle cx="1517.43" cy="175.10" r="2" fill="#a35fc4"/><circle cx="1522.73" cy="175.10" r="2" fill="#a35fc4"/><text x="1499.43" y="167.80" font-size="11" font-weight="700" fill="#111" text-anchor="middle" stroke="#111" stroke-width="0.3">Wash 10K</text><text x="1499.43" y="211.00" font-size="9.6" font-weight="700" fill="#333" text-anchor="middle" letter-spacing="0.25" stroke="#333" stroke-width="0.2">4.358</text><circle cx="1499.43" cy="225.90" r="11.6" fill="rgba(228,228,228,0.6)" stroke="#707070" stroke-width="1.15"/><text x="1499.43" y="229.00" font-size="9.8" font-weight="700" fill="#000" text-anchor="middle" letter-spacing="0.1" stroke="#000" stroke-width="0.3">605</text><rect x="1549.49" y="171.50" width="25.6" height="25.6" rx="6.5" fill="rgba(200,200,200,0.3)"/><circle cx="1561.89" cy="181.30" r="7.6" fill="rgba(240,194,234,0.9)" stroke="#a88aa4" stroke-width="0.9"/><rect x="1550.09" y="192.10" width="24.4" height="8.7" rx="4" fill="rgba(246,210,240,0.85)" stroke="#b894b2" stroke-width="0.8"/><rect x="1549.49" y="171.50" width="25.6" height="25.6" rx="6.5" fill="none" stroke="#151515" stroke-width="1.45"/><line x1="1562.2857142857142" y1="183.10" x2="1562.2857142857142" y2="192.30" stroke="#2f9bff" stroke-width="2.6" stroke-linecap="round"/><path d="M1558.79 189.30Q1562.29 190.50 1565.79 189.30L1562.29 196.80Z" fill="#2f9bff"/><circle cx="1585.49" cy="169.30" r="2" fill="#e45ed6"/><circle cx="1580.09" cy="175.10" r="2" fill="#e45ed6"/><circle cx="1585.49" cy="175.10" r="2" fill="#e45ed6"/><text x="1562.29" y="167.80" font-size="11" font-weight="700" fill="#111" text-anchor="middle" stroke="#111" stroke-width="0.3">Pointe</text><text x="1562.29" y="211.00" font-size="9.6" font-weight="700" fill="#333" text-anchor="middle" letter-spacing="0.25" stroke="#333" stroke-width="0.2">4.145</text><circle cx="1562.29" cy="225.90" r="11.6" fill="rgba(228,228,228,0.6)" stroke="#707070" stroke-width="1.15"/><text x="1562.29" y="229.00" font-size="9.8" font-weight="700" fill="#000" text-anchor="middle" letter-spacing="0.1" stroke="#000" stroke-width="0.3">507</text><rect x="1612.34" y="171.50" width="25.6" height="25.6" rx="6.5" fill="rgba(200,200,200,0.3)"/><circle cx="1625.14" cy="181.70" r="8.8" fill="rgba(222,210,232,0.85)" stroke="#a898b4" stroke-width="0.8"/><circle cx="1625.14" cy="181.70" r="6.4" fill="none" stroke="#9f8ab0" stroke-width="0.8"/><circle cx="1625.14" cy="181.70" r="4.4" fill="#c6a8dc" stroke="#9a80b0" stroke-width="0.7"/><rect x="1610.34" y="192.30" width="29.4" height="8.5" rx="4" fill="rgba(234,222,240,0.9)" stroke="#a897b2" stroke-width="0.8"/><rect x="1612.34" y="171.50" width="25.6" height="25.6" rx="6.5" fill="none" stroke="#151515" stroke-width="1.45"/><line x1="1625.142857142857" y1="183.10" x2="1625.142857142857" y2="192.30" stroke="#2f9bff" stroke-width="2.6" stroke-linecap="round"/><path d="M1621.64 189.30Q1625.14 190.50 1628.64 189.30L1625.14 196.80Z" fill="#2f9bff"/><circle cx="1643.14" cy="175.10" r="2" fill="#a35fc4"/><circle cx="1648.44" cy="175.10" r="2" fill="#a35fc4"/><text x="1625.14" y="167.80" font-size="11" font-weight="700" fill="#111" text-anchor="middle" stroke="#111" stroke-width="0.3">Wash 10K</text><text x="1625.14" y="211.00" font-size="9.6" font-weight="700" fill="#333" text-anchor="middle" letter-spacing="0.25" stroke="#333" stroke-width="0.2">4.391</text><circle cx="1625.14" cy="225.90" r="11.6" fill="rgba(228,228,228,0.6)" stroke="#707070" stroke-width="1.15"/><text x="1625.14" y="229.00" font-size="9.8" font-weight="700" fill="#000" text-anchor="middle" letter-spacing="0.1" stroke="#000" stroke-width="0.3">606</text><rect x="1675.20" y="171.50" width="25.6" height="25.6" rx="6.5" fill="rgba(200,200,200,0.3)"/><circle cx="1687.60" cy="181.30" r="7.6" fill="rgba(240,194,234,0.9)" stroke="#a88aa4" stroke-width="0.9"/><rect x="1675.80" y="192.10" width="24.4" height="8.7" rx="4" fill="rgba(246,210,240,0.85)" stroke="#b894b2" stroke-width="0.8"/><rect x="1675.20" y="171.50" width="25.6" height="25.6" rx="6.5" fill="none" stroke="#151515" stroke-width="1.45"/><line x1="1688.0" y1="183.10" x2="1688.0" y2="192.30" stroke="#2f9bff" stroke-width="2.6" stroke-linecap="round"/><path d="M1684.50 189.30Q1688.00 190.50 1691.50 189.30L1688.00 196.80Z" fill="#2f9bff"/><circle cx="1711.20" cy="169.30" r="2" fill="#e45ed6"/><circle cx="1705.80" cy="175.10" r="2" fill="#e45ed6"/><circle cx="1711.20" cy="175.10" r="2" fill="#e45ed6"/><text x="1688.00" y="167.80" font-size="11" font-weight="700" fill="#111" text-anchor="middle" stroke="#111" stroke-width="0.3">Pointe</text><text x="1688.00" y="211.00" font-size="9.6" font-weight="700" fill="#333" text-anchor="middle" letter-spacing="0.25" stroke="#333" stroke-width="0.2">4.169</text><circle cx="1688.00" cy="225.90" r="11.6" fill="rgba(228,228,228,0.6)" stroke="#707070" stroke-width="1.15"/><text x="1688.00" y="229.00" font-size="9.8" font-weight="700" fill="#000" text-anchor="middle" letter-spacing="0.1" stroke="#000" stroke-width="0.3">508</text><ellipse cx="808.00" cy="273.20" rx="16.8" ry="10.4" fill="#deebd0" stroke="#a3b093" stroke-width="0.9"/><line x1="796.00" y1="264.20" x2="820.00" y2="264.20" stroke="#9aa590" stroke-width="0.8"/><line x1="796.00" y1="282.20" x2="820.00" y2="282.20" stroke="#9aa590" stroke-width="0.8"/><line x1="798.60" y1="264.20" x2="798.60" y2="282.20" stroke="#8a977e" stroke-width="1.2"/><line x1="808.00" y1="264.20" x2="808.00" y2="282.20" stroke="#8a977e" stroke-width="1.2"/><line x1="816.60" y1="264.20" x2="816.60" y2="282.20" stroke="#8a977e" stroke-width="1.2"/><rect x="795.20" y="260.00" width="25.6" height="25.6" rx="6.5" fill="none" stroke="#151515" stroke-width="1.45"/><line x1="808" y1="271.60" x2="808" y2="280.80" stroke="#2f9bff" stroke-width="2.6" stroke-linecap="round"/><path d="M804.50 277.80Q808.00 279.00 811.50 277.80L808.00 285.30Z" fill="#2f9bff"/><circle cx="825.60" cy="263.80" r="1.9" fill="#acd38a"/><circle cx="830.90" cy="263.80" r="1.9" fill="#acd38a"/><text x="808.00" y="256.30" font-size="11" font-weight="700" fill="#111" text-anchor="middle" stroke="#111" stroke-width="0.3">Tube</text><text x="808.00" y="299.50" font-size="9.6" font-weight="700" fill="#333" text-anchor="middle" letter-spacing="0.25" stroke="#333" stroke-width="0.2">7.1</text><circle cx="808.00" cy="314.40" r="11.6" fill="rgba(228,228,228,0.6)" stroke="#707070" stroke-width="1.15"/><text x="808.00" y="317.50" font-size="9.8" font-weight="700" fill="#000" text-anchor="middle" letter-spacing="0.1" stroke="#000" stroke-width="0.3">901</text><ellipse cx="984.00" cy="273.20" rx="16.8" ry="10.4" fill="#deebd0" stroke="#a3b093" stroke-width="0.9"/><line x1="972.00" y1="264.20" x2="996.00" y2="264.20" stroke="#9aa590" stroke-width="0.8"/><line x1="972.00" y1="282.20" x2="996.00" y2="282.20" stroke="#9aa590" stroke-width="0.8"/><line x1="974.60" y1="264.20" x2="974.60" y2="282.20" stroke="#8a977e" stroke-width="1.2"/><line x1="984.00" y1="264.20" x2="984.00" y2="282.20" stroke="#8a977e" stroke-width="1.2"/><line x1="992.60" y1="264.20" x2="992.60" y2="282.20" stroke="#8a977e" stroke-width="1.2"/><rect x="971.20" y="260.00" width="25.6" height="25.6" rx="6.5" fill="none" stroke="#151515" stroke-width="1.45"/><line x1="984" y1="271.60" x2="984" y2="280.80" stroke="#2f9bff" stroke-width="2.6" stroke-linecap="round"/><path d="M980.50 277.80Q984.00 279.00 987.50 277.80L984.00 285.30Z" fill="#2f9bff"/><circle cx="1001.60" cy="263.80" r="1.9" fill="#acd38a"/><circle cx="1006.90" cy="263.80" r="1.9" fill="#acd38a"/><text x="984.00" y="256.30" font-size="11" font-weight="700" fill="#111" text-anchor="middle" stroke="#111" stroke-width="0.3">Tube</text><text x="984.00" y="299.50" font-size="9.6" font-weight="700" fill="#333" text-anchor="middle" letter-spacing="0.25" stroke="#333" stroke-width="0.2">7.23</text><circle cx="984.00" cy="314.40" r="11.6" fill="rgba(228,228,228,0.6)" stroke="#707070" stroke-width="1.15"/><text x="984.00" y="317.50" font-size="9.8" font-weight="700" fill="#000" text-anchor="middle" letter-spacing="0.1" stroke="#000" stroke-width="0.3">902</text><ellipse cx="1160.00" cy="273.20" rx="16.8" ry="10.4" fill="#deebd0" stroke="#a3b093" stroke-width="0.9"/><line x1="1148.00" y1="264.20" x2="1172.00" y2="264.20" stroke="#9aa590" stroke-width="0.8"/><line x1="1148.00" y1="282.20" x2="1172.00" y2="282.20" stroke="#9aa590" stroke-width="0.8"/><line x1="1150.60" y1="264.20" x2="1150.60" y2="282.20" stroke="#8a977e" stroke-width="1.2"/><line x1="1160.00" y1="264.20" x2="1160.00" y2="282.20" stroke="#8a977e" stroke-width="1.2"/><line x1="1168.60" y1="264.20" x2="1168.60" y2="282.20" stroke="#8a977e" stroke-width="1.2"/><rect x="1147.20" y="260.00" width="25.6" height="25.6" rx="6.5" fill="none" stroke="#151515" stroke-width="1.45"/><line x1="1160" y1="271.60" x2="1160" y2="280.80" stroke="#2f9bff" stroke-width="2.6" stroke-linecap="round"/><path d="M1156.50 277.80Q1160.00 279.00 1163.50 277.80L1160.00 285.30Z" fill="#2f9bff"/><circle cx="1177.60" cy="263.80" r="1.9" fill="#acd38a"/><circle cx="1182.90" cy="263.80" r="1.9" fill="#acd38a"/><text x="1160.00" y="256.30" font-size="11" font-weight="700" fill="#111" text-anchor="middle" stroke="#111" stroke-width="0.3">Tube</text><text x="1160.00" y="299.50" font-size="9.6" font-weight="700" fill="#333" text-anchor="middle" letter-spacing="0.25" stroke="#333" stroke-width="0.2">7.45</text><circle cx="1160.00" cy="314.40" r="11.6" fill="rgba(228,228,228,0.6)" stroke="#707070" stroke-width="1.15"/><text x="1160.00" y="317.50" font-size="9.8" font-weight="700" fill="#000" text-anchor="middle" letter-spacing="0.1" stroke="#000" stroke-width="0.3">903</text><ellipse cx="1336.00" cy="273.20" rx="16.8" ry="10.4" fill="#deebd0" stroke="#a3b093" stroke-width="0.9"/><line x1="1324.00" y1="264.20" x2="1348.00" y2="264.20" stroke="#9aa590" stroke-width="0.8"/><line x1="1324.00" y1="282.20" x2="1348.00" y2="282.20" stroke="#9aa590" stroke-width="0.8"/><line x1="1326.60" y1="264.20" x2="1326.60" y2="282.20" stroke="#8a977e" stroke-width="1.2"/><line x1="1336.00" y1="264.20" x2="1336.00" y2="282.20" stroke="#8a977e" stroke-width="1.2"/><line x1="1344.60" y1="264.20" x2="1344.60" y2="282.20" stroke="#8a977e" stroke-width="1.2"/><rect x="1323.20" y="260.00" width="25.6" height="25.6" rx="6.5" fill="none" stroke="#151515" stroke-width="1.45"/><line x1="1336" y1="271.60" x2="1336" y2="280.80" stroke="#2f9bff" stroke-width="2.6" stroke-linecap="round"/><path d="M1332.50 277.80Q1336.00 279.00 1339.50 277.80L1336.00 285.30Z" fill="#2f9bff"/><circle cx="1353.60" cy="263.80" r="1.9" fill="#acd38a"/><circle cx="1358.90" cy="263.80" r="1.9" fill="#acd38a"/><text x="1336.00" y="256.30" font-size="11" font-weight="700" fill="#111" text-anchor="middle" stroke="#111" stroke-width="0.3">Tube</text><text x="1336.00" y="299.50" font-size="9.6" font-weight="700" fill="#333" text-anchor="middle" letter-spacing="0.25" stroke="#333" stroke-width="0.2">7.67</text><circle cx="1336.00" cy="314.40" r="11.6" fill="rgba(228,228,228,0.6)" stroke="#707070" stroke-width="1.15"/><text x="1336.00" y="317.50" font-size="9.8" font-weight="700" fill="#000" text-anchor="middle" letter-spacing="0.1" stroke="#000" stroke-width="0.3">904</text><ellipse cx="1512.00" cy="273.20" rx="16.8" ry="10.4" fill="#deebd0" stroke="#a3b093" stroke-width="0.9"/><line x1="1500.00" y1="264.20" x2="1524.00" y2="264.20" stroke="#9aa590" stroke-width="0.8"/><line x1="1500.00" y1="282.20" x2="1524.00" y2="282.20" stroke="#9aa590" stroke-width="0.8"/><line x1="1502.60" y1="264.20" x2="1502.60" y2="282.20" stroke="#8a977e" stroke-width="1.2"/><line x1="1512.00" y1="264.20" x2="1512.00" y2="282.20" stroke="#8a977e" stroke-width="1.2"/><line x1="1520.60" y1="264.20" x2="1520.60" y2="282.20" stroke="#8a977e" stroke-width="1.2"/><rect x="1499.20" y="260.00" width="25.6" height="25.6" rx="6.5" fill="none" stroke="#151515" stroke-width="1.45"/><line x1="1512" y1="271.60" x2="1512" y2="280.80" stroke="#2f9bff" stroke-width="2.6" stroke-linecap="round"/><path d="M1508.50 277.80Q1512.00 279.00 1515.50 277.80L1512.00 285.30Z" fill="#2f9bff"/><circle cx="1529.60" cy="263.80" r="1.9" fill="#acd38a"/><circle cx="1534.90" cy="263.80" r="1.9" fill="#acd38a"/><text x="1512.00" y="256.30" font-size="11" font-weight="700" fill="#111" text-anchor="middle" stroke="#111" stroke-width="0.3">Tube</text><text x="1512.00" y="299.50" font-size="9.6" font-weight="700" fill="#333" text-anchor="middle" letter-spacing="0.25" stroke="#333" stroke-width="0.2">7.89</text><circle cx="1512.00" cy="314.40" r="11.6" fill="rgba(228,228,228,0.6)" stroke="#707070" stroke-width="1.15"/><text x="1512.00" y="317.50" font-size="9.8" font-weight="700" fill="#000" text-anchor="middle" letter-spacing="0.1" stroke="#000" stroke-width="0.3">905</text><ellipse cx="1688.00" cy="273.20" rx="16.8" ry="10.4" fill="#deebd0" stroke="#a3b093" stroke-width="0.9"/><line x1="1676.00" y1="264.20" x2="1700.00" y2="264.20" stroke="#9aa590" stroke-width="0.8"/><line x1="1676.00" y1="282.20" x2="1700.00" y2="282.20" stroke="#9aa590" stroke-width="0.8"/><line x1="1678.60" y1="264.20" x2="1678.60" y2="282.20" stroke="#8a977e" stroke-width="1.2"/><line x1="1688.00" y1="264.20" x2="1688.00" y2="282.20" stroke="#8a977e" stroke-width="1.2"/><line x1="1696.60" y1="264.20" x2="1696.60" y2="282.20" stroke="#8a977e" stroke-width="1.2"/><rect x="1675.20" y="260.00" width="25.6" height="25.6" rx="6.5" fill="none" stroke="#151515" stroke-width="1.45"/><line x1="1688" y1="271.60" x2="1688" y2="280.80" stroke="#2f9bff" stroke-width="2.6" stroke-linecap="round"/><path d="M1684.50 277.80Q1688.00 279.00 1691.50 277.80L1688.00 285.30Z" fill="#2f9bff"/><circle cx="1705.60" cy="263.80" r="1.9" fill="#acd38a"/><circle cx="1710.90" cy="263.80" r="1.9" fill="#acd38a"/><text x="1688.00" y="256.30" font-size="11" font-weight="700" fill="#111" text-anchor="middle" stroke="#111" stroke-width="0.3">Tube</text><text x="1688.00" y="299.50" font-size="9.6" font-weight="700" fill="#333" text-anchor="middle" letter-spacing="0.25" stroke="#333" stroke-width="0.2">7.111</text><circle cx="1688.00" cy="314.40" r="11.6" fill="rgba(228,228,228,0.6)" stroke="#707070" stroke-width="1.15"/><text x="1688.00" y="317.50" font-size="9.8" font-weight="700" fill="#000" text-anchor="middle" letter-spacing="0.1" stroke="#000" stroke-width="0.3">906</text><rect x="795.20" y="391.50" width="25.6" height="25.6" rx="6.5" fill="rgba(200,200,200,0.3)"/><rect x="789.00" y="399.30" width="38" height="9.6" rx="3.5" fill="rgba(244,226,168,0.62)" stroke="#cdbb88" stroke-width="0.8"/><circle cx="793.20" cy="404.00" r="2" fill="#f2cc4c"/><circle cx="800.60" cy="404.00" r="2" fill="#f2cc4c"/><circle cx="808.00" cy="404.00" r="2" fill="#f2cc4c"/><circle cx="815.40" cy="404.00" r="2" fill="#f2cc4c"/><circle cx="822.80" cy="404.00" r="2" fill="#f2cc4c"/><path d="M800.60 417.30L800.60 415.30Q800.60 412.10 804.00 412.10L812.00 412.10Q815.40 412.10 815.40 415.30L815.40 417.30Z" fill="#f4edd8" stroke="#b5ab90" stroke-width="0.7"/><rect x="795.20" y="391.50" width="25.6" height="25.6" rx="6.5" fill="none" stroke="#151515" stroke-width="1.45"/><line x1="808" y1="403.10" x2="808" y2="412.30" stroke="#2f9bff" stroke-width="2.6" stroke-linecap="round"/><path d="M804.50 409.30Q808.00 410.50 811.50 409.30L808.00 416.80Z" fill="#2f9bff"/><circle cx="825.70" cy="389.70" r="2" fill="#f0d060"/><circle cx="831.10" cy="389.70" r="2" fill="#f0d060"/><circle cx="825.70" cy="395.30" r="2" fill="#f0d060"/><text x="808.00" y="387.80" font-size="11" font-weight="700" fill="#111" text-anchor="middle" stroke="#111" stroke-width="0.3">Flash</text><text x="808.00" y="431.00" font-size="9.6" font-weight="700" fill="#333" text-anchor="middle" letter-spacing="0.25" stroke="#333" stroke-width="0.2">3.1</text><circle cx="808.00" cy="445.90" r="11.6" fill="rgba(228,228,228,0.6)" stroke="#707070" stroke-width="1.15"/><text x="808.00" y="449.00" font-size="9.8" font-weight="700" fill="#000" text-anchor="middle" letter-spacing="0.1" stroke="#000" stroke-width="0.3">801</text><rect x="883.20" y="391.50" width="25.6" height="25.6" rx="6.5" fill="rgba(200,200,200,0.3)"/><rect x="902.50" y="398.70" width="12.5" height="10.6" rx="3.5" fill="rgba(212,212,212,0.85)" stroke="#6a6a6a" stroke-width="0.8"/><rect x="884.00" y="398.70" width="19.3" height="10.8" rx="3" fill="rgba(200,200,200,0.9)" stroke="#222" stroke-width="1.1"/><circle cx="888.40" cy="413.00" r="1.5" fill="#444"/><rect x="883.20" y="391.50" width="25.6" height="25.6" rx="6.5" fill="none" stroke="#151515" stroke-width="1.45"/><line x1="896" y1="403.10" x2="896" y2="412.30" stroke="#2f9bff" stroke-width="2.6" stroke-linecap="round"/><path d="M892.50 409.30Q896.00 410.50 899.50 409.30L896.00 416.80Z" fill="#2f9bff"/><text x="896.00" y="387.80" font-size="11" font-weight="700" fill="#111" text-anchor="middle" stroke="#111" stroke-width="0.3">Guit Back</text><text x="896.00" y="431.00" font-size="9.6" font-weight="700" fill="#333" text-anchor="middle" letter-spacing="0.25" stroke="#333" stroke-width="0.2">3.81</text><circle cx="896.00" cy="445.90" r="11.6" fill="rgba(228,228,228,0.6)" stroke="#707070" stroke-width="1.15"/><text x="896.00" y="449.00" font-size="9.8" font-weight="700" fill="#000" text-anchor="middle" letter-spacing="0.1" stroke="#000" stroke-width="0.3">404</text><rect x="971.20" y="391.50" width="25.6" height="25.6" rx="6.5" fill="rgba(200,200,200,0.3)"/><circle cx="983.60" cy="401.30" r="7.6" fill="rgba(240,194,234,0.9)" stroke="#a88aa4" stroke-width="0.9"/><rect x="971.80" y="412.10" width="24.4" height="8.7" rx="4" fill="rgba(246,210,240,0.85)" stroke="#b894b2" stroke-width="0.8"/><rect x="971.20" y="391.50" width="25.6" height="25.6" rx="6.5" fill="none" stroke="#151515" stroke-width="1.45"/><line x1="984" y1="403.10" x2="984" y2="412.30" stroke="#2f9bff" stroke-width="2.6" stroke-linecap="round"/><path d="M980.50 409.30Q984.00 410.50 987.50 409.30L984.00 416.80Z" fill="#2f9bff"/><circle cx="1007.20" cy="389.30" r="2" fill="#e45ed6"/><circle cx="1001.80" cy="395.10" r="2" fill="#e45ed6"/><circle cx="1007.20" cy="395.10" r="2" fill="#e45ed6"/><text x="984.00" y="387.80" font-size="11" font-weight="700" fill="#111" text-anchor="middle" stroke="#111" stroke-width="0.3">Pointe</text><text x="984.00" y="431.00" font-size="9.6" font-weight="700" fill="#333" text-anchor="middle" letter-spacing="0.25" stroke="#333" stroke-width="0.2">3.84</text><circle cx="984.00" cy="445.90" r="11.6" fill="rgba(228,228,228,0.6)" stroke="#707070" stroke-width="1.15"/><text x="984.00" y="449.00" font-size="9.8" font-weight="700" fill="#000" text-anchor="middle" letter-spacing="0.1" stroke="#000" stroke-width="0.3">509</text><rect x="1059.20" y="391.50" width="25.6" height="25.6" rx="6.5" fill="rgba(200,200,200,0.3)"/><rect x="1053.00" y="399.30" width="38" height="9.6" rx="3.5" fill="rgba(244,226,168,0.62)" stroke="#cdbb88" stroke-width="0.8"/><circle cx="1057.20" cy="404.00" r="2" fill="#f2cc4c"/><circle cx="1064.60" cy="404.00" r="2" fill="#f2cc4c"/><circle cx="1072.00" cy="404.00" r="2" fill="#f2cc4c"/><circle cx="1079.40" cy="404.00" r="2" fill="#f2cc4c"/><circle cx="1086.80" cy="404.00" r="2" fill="#f2cc4c"/><path d="M1064.60 417.30L1064.60 415.30Q1064.60 412.10 1068.00 412.10L1076.00 412.10Q1079.40 412.10 1079.40 415.30L1079.40 417.30Z" fill="#f4edd8" stroke="#b5ab90" stroke-width="0.7"/><rect x="1059.20" y="391.50" width="25.6" height="25.6" rx="6.5" fill="none" stroke="#151515" stroke-width="1.45"/><line x1="1072" y1="403.10" x2="1072" y2="412.30" stroke="#2f9bff" stroke-width="2.6" stroke-linecap="round"/><path d="M1068.50 409.30Q1072.00 410.50 1075.50 409.30L1072.00 416.80Z" fill="#2f9bff"/><circle cx="1089.70" cy="389.70" r="2" fill="#f0d060"/><circle cx="1095.10" cy="389.70" r="2" fill="#f0d060"/><circle cx="1089.70" cy="395.30" r="2" fill="#f0d060"/><text x="1072.00" y="387.80" font-size="11" font-weight="700" fill="#111" text-anchor="middle" stroke="#111" stroke-width="0.3">Flash</text><text x="1072.00" y="431.00" font-size="9.6" font-weight="700" fill="#333" text-anchor="middle" letter-spacing="0.25" stroke="#333" stroke-width="0.2">3.21</text><circle cx="1072.00" cy="445.90" r="11.6" fill="rgba(228,228,228,0.6)" stroke="#707070" stroke-width="1.15"/><text x="1072.00" y="449.00" font-size="9.8" font-weight="700" fill="#000" text-anchor="middle" letter-spacing="0.1" stroke="#000" stroke-width="0.3">802</text><rect x="1147.20" y="391.50" width="25.6" height="25.6" rx="6.5" fill="rgba(200,200,200,0.3)"/><circle cx="1159.60" cy="401.30" r="7.6" fill="rgba(240,194,234,0.9)" stroke="#a88aa4" stroke-width="0.9"/><rect x="1147.80" y="412.10" width="24.4" height="8.7" rx="4" fill="rgba(246,210,240,0.85)" stroke="#b894b2" stroke-width="0.8"/><rect x="1147.20" y="391.50" width="25.6" height="25.6" rx="6.5" fill="none" stroke="#151515" stroke-width="1.45"/><line x1="1160" y1="403.10" x2="1160" y2="412.30" stroke="#2f9bff" stroke-width="2.6" stroke-linecap="round"/><path d="M1156.50 409.30Q1160.00 410.50 1163.50 409.30L1160.00 416.80Z" fill="#2f9bff"/><circle cx="1183.20" cy="389.30" r="2" fill="#e45ed6"/><circle cx="1177.80" cy="395.10" r="2" fill="#e45ed6"/><circle cx="1183.20" cy="395.10" r="2" fill="#e45ed6"/><text x="1160.00" y="387.80" font-size="11" font-weight="700" fill="#111" text-anchor="middle" stroke="#111" stroke-width="0.3">Pointe</text><text x="1160.00" y="431.00" font-size="9.6" font-weight="700" fill="#333" text-anchor="middle" letter-spacing="0.25" stroke="#333" stroke-width="0.2">3.108</text><circle cx="1160.00" cy="445.90" r="11.6" fill="rgba(228,228,228,0.6)" stroke="#707070" stroke-width="1.15"/><text x="1160.00" y="449.00" font-size="9.8" font-weight="700" fill="#000" text-anchor="middle" letter-spacing="0.1" stroke="#000" stroke-width="0.3">510</text><rect x="1235.20" y="391.50" width="25.6" height="25.6" rx="6.5" fill="rgba(200,200,200,0.3)"/><rect x="1254.50" y="398.70" width="12.5" height="10.6" rx="3.5" fill="rgba(212,212,212,0.85)" stroke="#6a6a6a" stroke-width="0.8"/><rect x="1236.00" y="398.70" width="19.3" height="10.8" rx="3" fill="rgba(200,200,200,0.9)" stroke="#222" stroke-width="1.1"/><circle cx="1240.40" cy="413.00" r="1.5" fill="#444"/><rect x="1235.20" y="391.50" width="25.6" height="25.6" rx="6.5" fill="none" stroke="#151515" stroke-width="1.45"/><line x1="1248" y1="403.10" x2="1248" y2="412.30" stroke="#2f9bff" stroke-width="2.6" stroke-linecap="round"/><path d="M1244.50 409.30Q1248.00 410.50 1251.50 409.30L1248.00 416.80Z" fill="#2f9bff"/><text x="1248.00" y="387.80" font-size="11" font-weight="700" fill="#111" text-anchor="middle" stroke="#111" stroke-width="0.3">Drums</text><text x="1248.00" y="431.00" font-size="9.6" font-weight="700" fill="#333" text-anchor="middle" letter-spacing="0.25" stroke="#333" stroke-width="0.2">3.82</text><circle cx="1248.00" cy="445.90" r="11.6" fill="rgba(228,228,228,0.6)" stroke="#707070" stroke-width="1.15"/><text x="1248.00" y="449.00" font-size="9.8" font-weight="700" fill="#000" text-anchor="middle" letter-spacing="0.1" stroke="#000" stroke-width="0.3">405</text><rect x="1327.20" y="391.50" width="25.6" height="25.6" rx="6.5" fill="rgba(200,200,200,0.3)"/><circle cx="1339.60" cy="401.30" r="7.6" fill="rgba(240,194,234,0.9)" stroke="#a88aa4" stroke-width="0.9"/><rect x="1327.80" y="412.10" width="24.4" height="8.7" rx="4" fill="rgba(246,210,240,0.85)" stroke="#b894b2" stroke-width="0.8"/><rect x="1327.20" y="391.50" width="25.6" height="25.6" rx="6.5" fill="none" stroke="#151515" stroke-width="1.45"/><line x1="1340" y1="403.10" x2="1340" y2="412.30" stroke="#2f9bff" stroke-width="2.6" stroke-linecap="round"/><path d="M1336.50 409.30Q1340.00 410.50 1343.50 409.30L1340.00 416.80Z" fill="#2f9bff"/><circle cx="1363.20" cy="389.30" r="2" fill="#e45ed6"/><circle cx="1357.80" cy="395.10" r="2" fill="#e45ed6"/><circle cx="1363.20" cy="395.10" r="2" fill="#e45ed6"/><text x="1340.00" y="387.80" font-size="11" font-weight="700" fill="#111" text-anchor="middle" stroke="#111" stroke-width="0.3">Pointe</text><text x="1340.00" y="431.00" font-size="9.6" font-weight="700" fill="#333" text-anchor="middle" letter-spacing="0.25" stroke="#333" stroke-width="0.2">3.132</text><circle cx="1340.00" cy="445.90" r="11.6" fill="rgba(228,228,228,0.6)" stroke="#707070" stroke-width="1.15"/><text x="1340.00" y="449.00" font-size="9.8" font-weight="700" fill="#000" text-anchor="middle" letter-spacing="0.1" stroke="#000" stroke-width="0.3">511</text><rect x="1411.20" y="391.50" width="25.6" height="25.6" rx="6.5" fill="rgba(200,200,200,0.3)"/><rect x="1405.00" y="399.30" width="38" height="9.6" rx="3.5" fill="rgba(244,226,168,0.62)" stroke="#cdbb88" stroke-width="0.8"/><circle cx="1409.20" cy="404.00" r="2" fill="#f2cc4c"/><circle cx="1416.60" cy="404.00" r="2" fill="#f2cc4c"/><circle cx="1424.00" cy="404.00" r="2" fill="#f2cc4c"/><circle cx="1431.40" cy="404.00" r="2" fill="#f2cc4c"/><circle cx="1438.80" cy="404.00" r="2" fill="#f2cc4c"/><path d="M1416.60 417.30L1416.60 415.30Q1416.60 412.10 1420.00 412.10L1428.00 412.10Q1431.40 412.10 1431.40 415.30L1431.40 417.30Z" fill="#f4edd8" stroke="#b5ab90" stroke-width="0.7"/><rect x="1411.20" y="391.50" width="25.6" height="25.6" rx="6.5" fill="none" stroke="#151515" stroke-width="1.45"/><line x1="1424" y1="403.10" x2="1424" y2="412.30" stroke="#2f9bff" stroke-width="2.6" stroke-linecap="round"/><path d="M1420.50 409.30Q1424.00 410.50 1427.50 409.30L1424.00 416.80Z" fill="#2f9bff"/><circle cx="1441.70" cy="389.70" r="2" fill="#f0d060"/><circle cx="1447.10" cy="389.70" r="2" fill="#f0d060"/><circle cx="1441.70" cy="395.30" r="2" fill="#f0d060"/><text x="1424.00" y="387.80" font-size="11" font-weight="700" fill="#111" text-anchor="middle" stroke="#111" stroke-width="0.3">Flash</text><text x="1424.00" y="431.00" font-size="9.6" font-weight="700" fill="#333" text-anchor="middle" letter-spacing="0.25" stroke="#333" stroke-width="0.2">3.41</text><circle cx="1424.00" cy="445.90" r="11.6" fill="rgba(228,228,228,0.6)" stroke="#707070" stroke-width="1.15"/><text x="1424.00" y="449.00" font-size="9.8" font-weight="700" fill="#000" text-anchor="middle" letter-spacing="0.1" stroke="#000" stroke-width="0.3">803</text><rect x="1499.20" y="391.50" width="25.6" height="25.6" rx="6.5" fill="rgba(200,200,200,0.3)"/><circle cx="1511.60" cy="401.30" r="7.6" fill="rgba(240,194,234,0.9)" stroke="#a88aa4" stroke-width="0.9"/><rect x="1499.80" y="412.10" width="24.4" height="8.7" rx="4" fill="rgba(246,210,240,0.85)" stroke="#b894b2" stroke-width="0.8"/><rect x="1499.20" y="391.50" width="25.6" height="25.6" rx="6.5" fill="none" stroke="#151515" stroke-width="1.45"/><line x1="1512" y1="403.10" x2="1512" y2="412.30" stroke="#2f9bff" stroke-width="2.6" stroke-linecap="round"/><path d="M1508.50 409.30Q1512.00 410.50 1515.50 409.30L1512.00 416.80Z" fill="#2f9bff"/><circle cx="1535.20" cy="389.30" r="2" fill="#e45ed6"/><circle cx="1529.80" cy="395.10" r="2" fill="#e45ed6"/><circle cx="1535.20" cy="395.10" r="2" fill="#e45ed6"/><text x="1512.00" y="387.80" font-size="11" font-weight="700" fill="#111" text-anchor="middle" stroke="#111" stroke-width="0.3">Pointe</text><text x="1512.00" y="431.00" font-size="9.6" font-weight="700" fill="#333" text-anchor="middle" letter-spacing="0.25" stroke="#333" stroke-width="0.2">3.156</text><circle cx="1512.00" cy="445.90" r="11.6" fill="rgba(228,228,228,0.6)" stroke="#707070" stroke-width="1.15"/><text x="1512.00" y="449.00" font-size="9.8" font-weight="700" fill="#000" text-anchor="middle" letter-spacing="0.1" stroke="#000" stroke-width="0.3">512</text><rect x="1587.20" y="391.50" width="25.6" height="25.6" rx="6.5" fill="rgba(200,200,200,0.3)"/><rect x="1606.50" y="398.70" width="12.5" height="10.6" rx="3.5" fill="rgba(212,212,212,0.85)" stroke="#6a6a6a" stroke-width="0.8"/><rect x="1588.00" y="398.70" width="19.3" height="10.8" rx="3" fill="rgba(200,200,200,0.9)" stroke="#222" stroke-width="1.1"/><circle cx="1592.40" cy="413.00" r="1.5" fill="#444"/><rect x="1587.20" y="391.50" width="25.6" height="25.6" rx="6.5" fill="none" stroke="#151515" stroke-width="1.45"/><line x1="1600" y1="403.10" x2="1600" y2="412.30" stroke="#2f9bff" stroke-width="2.6" stroke-linecap="round"/><path d="M1596.50 409.30Q1600.00 410.50 1603.50 409.30L1600.00 416.80Z" fill="#2f9bff"/><text x="1600.00" y="387.80" font-size="11" font-weight="700" fill="#111" text-anchor="middle" stroke="#111" stroke-width="0.3">Bass Back</text><text x="1600.00" y="431.00" font-size="9.6" font-weight="700" fill="#333" text-anchor="middle" letter-spacing="0.25" stroke="#333" stroke-width="0.2">3.83</text><circle cx="1600.00" cy="445.90" r="11.6" fill="rgba(228,228,228,0.6)" stroke="#707070" stroke-width="1.15"/><text x="1600.00" y="449.00" font-size="9.8" font-weight="700" fill="#000" text-anchor="middle" letter-spacing="0.1" stroke="#000" stroke-width="0.3">406</text><rect x="1675.20" y="391.50" width="25.6" height="25.6" rx="6.5" fill="rgba(200,200,200,0.3)"/><rect x="1669.00" y="399.30" width="38" height="9.6" rx="3.5" fill="rgba(244,226,168,0.62)" stroke="#cdbb88" stroke-width="0.8"/><circle cx="1673.20" cy="404.00" r="2" fill="#f2cc4c"/><circle cx="1680.60" cy="404.00" r="2" fill="#f2cc4c"/><circle cx="1688.00" cy="404.00" r="2" fill="#f2cc4c"/><circle cx="1695.40" cy="404.00" r="2" fill="#f2cc4c"/><circle cx="1702.80" cy="404.00" r="2" fill="#f2cc4c"/><path d="M1680.60 417.30L1680.60 415.30Q1680.60 412.10 1684.00 412.10L1692.00 412.10Q1695.40 412.10 1695.40 415.30L1695.40 417.30Z" fill="#f4edd8" stroke="#b5ab90" stroke-width="0.7"/><rect x="1675.20" y="391.50" width="25.6" height="25.6" rx="6.5" fill="none" stroke="#151515" stroke-width="1.45"/><line x1="1688" y1="403.10" x2="1688" y2="412.30" stroke="#2f9bff" stroke-width="2.6" stroke-linecap="round"/><path d="M1684.50 409.30Q1688.00 410.50 1691.50 409.30L1688.00 416.80Z" fill="#2f9bff"/><circle cx="1705.70" cy="389.70" r="2" fill="#f0d060"/><circle cx="1711.10" cy="389.70" r="2" fill="#f0d060"/><circle cx="1705.70" cy="395.30" r="2" fill="#f0d060"/><text x="1688.00" y="387.80" font-size="11" font-weight="700" fill="#111" text-anchor="middle" stroke="#111" stroke-width="0.3">Flash</text><text x="1688.00" y="431.00" font-size="9.6" font-weight="700" fill="#333" text-anchor="middle" letter-spacing="0.25" stroke="#333" stroke-width="0.2">3.61</text><circle cx="1688.00" cy="445.90" r="11.6" fill="rgba(228,228,228,0.6)" stroke="#707070" stroke-width="1.15"/><text x="1688.00" y="449.00" font-size="9.8" font-weight="700" fill="#000" text-anchor="middle" letter-spacing="0.1" stroke="#000" stroke-width="0.3">804</text><rect x="751.20" y="435.70" width="25.6" height="25.6" rx="6.5" fill="rgba(200,200,200,0.3)"/><circle cx="759.50" cy="448.30" r="11.9" fill="rgba(243,218,198,0.9)" stroke="#9a9a9a" stroke-width="0.8"/><line x1="753.20" y1="448.30" x2="770.50" y2="448.30" stroke="#f39a4c" stroke-width="1.6" stroke-dasharray="1.6 1.6"/><rect x="751.20" y="435.70" width="25.6" height="25.6" rx="6.5" fill="none" stroke="#151515" stroke-width="1.45"/><line x1="764" y1="447.30" x2="764" y2="456.50" stroke="#2f9bff" stroke-width="2.6" stroke-linecap="round"/><path d="M760.50 453.50Q764.00 454.70 767.50 453.50L764.00 461.00Z" fill="#2f9bff"/><circle cx="787.40" cy="434.10" r="1.9" fill="#f28a3c"/><text x="764.00" y="432.00" font-size="11" font-weight="700" fill="#111" text-anchor="middle" stroke="#111" stroke-width="0.3">Led PAR</text><text x="764.00" y="475.20" font-size="9.6" font-weight="700" fill="#333" text-anchor="middle" letter-spacing="0.25" stroke="#333" stroke-width="0.2">5.25</text><circle cx="764.00" cy="490.10" r="11.6" fill="rgba(228,228,228,0.6)" stroke="#707070" stroke-width="1.15"/><text x="764.00" y="493.20" font-size="9.8" font-weight="700" fill="#000" text-anchor="middle" letter-spacing="0.1" stroke="#000" stroke-width="0.3">704</text><rect x="751.20" y="523.70" width="25.6" height="25.6" rx="6.5" fill="rgba(200,200,200,0.3)"/><circle cx="759.50" cy="536.30" r="11.9" fill="rgba(243,218,198,0.9)" stroke="#9a9a9a" stroke-width="0.8"/><line x1="753.20" y1="536.30" x2="770.50" y2="536.30" stroke="#f39a4c" stroke-width="1.6" stroke-dasharray="1.6 1.6"/><rect x="751.20" y="523.70" width="25.6" height="25.6" rx="6.5" fill="none" stroke="#151515" stroke-width="1.45"/><line x1="764" y1="535.30" x2="764" y2="544.50" stroke="#2f9bff" stroke-width="2.6" stroke-linecap="round"/><path d="M760.50 541.50Q764.00 542.70 767.50 541.50L764.00 549.00Z" fill="#2f9bff"/><circle cx="787.40" cy="522.10" r="1.9" fill="#f28a3c"/><text x="764.00" y="520.00" font-size="11" font-weight="700" fill="#111" text-anchor="middle" stroke="#111" stroke-width="0.3">Led PAR</text><text x="764.00" y="563.20" font-size="9.6" font-weight="700" fill="#333" text-anchor="middle" letter-spacing="0.25" stroke="#333" stroke-width="0.2">5.17</text><circle cx="764.00" cy="578.10" r="11.6" fill="rgba(228,228,228,0.6)" stroke="#707070" stroke-width="1.15"/><text x="764.00" y="581.20" font-size="9.8" font-weight="700" fill="#000" text-anchor="middle" letter-spacing="0.1" stroke="#000" stroke-width="0.3">703</text><rect x="751.20" y="611.70" width="25.6" height="25.6" rx="6.5" fill="rgba(200,200,200,0.3)"/><circle cx="759.50" cy="624.30" r="11.9" fill="rgba(243,218,198,0.9)" stroke="#9a9a9a" stroke-width="0.8"/><line x1="753.20" y1="624.30" x2="770.50" y2="624.30" stroke="#f39a4c" stroke-width="1.6" stroke-dasharray="1.6 1.6"/><rect x="751.20" y="611.70" width="25.6" height="25.6" rx="6.5" fill="none" stroke="#151515" stroke-width="1.45"/><line x1="764" y1="623.30" x2="764" y2="632.50" stroke="#2f9bff" stroke-width="2.6" stroke-linecap="round"/><path d="M760.50 629.50Q764.00 630.70 767.50 629.50L764.00 637.00Z" fill="#2f9bff"/><circle cx="787.40" cy="610.10" r="1.9" fill="#f28a3c"/><text x="764.00" y="608.00" font-size="11" font-weight="700" fill="#111" text-anchor="middle" stroke="#111" stroke-width="0.3">Led PAR</text><text x="764.00" y="651.20" font-size="9.6" font-weight="700" fill="#333" text-anchor="middle" letter-spacing="0.25" stroke="#333" stroke-width="0.2">5.9</text><circle cx="764.00" cy="666.10" r="11.6" fill="rgba(228,228,228,0.6)" stroke="#707070" stroke-width="1.15"/><text x="764.00" y="669.20" font-size="9.8" font-weight="700" fill="#000" text-anchor="middle" letter-spacing="0.1" stroke="#000" stroke-width="0.3">702</text><rect x="1719.20" y="435.70" width="25.6" height="25.6" rx="6.5" fill="rgba(200,200,200,0.3)"/><circle cx="1727.50" cy="448.30" r="11.9" fill="rgba(243,218,198,0.9)" stroke="#9a9a9a" stroke-width="0.8"/><line x1="1721.20" y1="448.30" x2="1738.50" y2="448.30" stroke="#f39a4c" stroke-width="1.6" stroke-dasharray="1.6 1.6"/><rect x="1719.20" y="435.70" width="25.6" height="25.6" rx="6.5" fill="none" stroke="#151515" stroke-width="1.45"/><line x1="1732" y1="447.30" x2="1732" y2="456.50" stroke="#2f9bff" stroke-width="2.6" stroke-linecap="round"/><path d="M1728.50 453.50Q1732.00 454.70 1735.50 453.50L1732.00 461.00Z" fill="#2f9bff"/><circle cx="1755.40" cy="434.10" r="1.9" fill="#f28a3c"/><text x="1732.00" y="432.00" font-size="11" font-weight="700" fill="#111" text-anchor="middle" stroke="#111" stroke-width="0.3">Led PAR</text><text x="1732.00" y="475.20" font-size="9.6" font-weight="700" fill="#333" text-anchor="middle" letter-spacing="0.25" stroke="#333" stroke-width="0.2">6.25</text><circle cx="1732.00" cy="490.10" r="11.6" fill="rgba(228,228,228,0.6)" stroke="#707070" stroke-width="1.15"/><text x="1732.00" y="493.20" font-size="9.8" font-weight="700" fill="#000" text-anchor="middle" letter-spacing="0.1" stroke="#000" stroke-width="0.3">708</text><rect x="1719.20" y="523.70" width="25.6" height="25.6" rx="6.5" fill="rgba(200,200,200,0.3)"/><circle cx="1727.50" cy="536.30" r="11.9" fill="rgba(243,218,198,0.9)" stroke="#9a9a9a" stroke-width="0.8"/><line x1="1721.20" y1="536.30" x2="1738.50" y2="536.30" stroke="#f39a4c" stroke-width="1.6" stroke-dasharray="1.6 1.6"/><rect x="1719.20" y="523.70" width="25.6" height="25.6" rx="6.5" fill="none" stroke="#151515" stroke-width="1.45"/><line x1="1732" y1="535.30" x2="1732" y2="544.50" stroke="#2f9bff" stroke-width="2.6" stroke-linecap="round"/><path d="M1728.50 541.50Q1732.00 542.70 1735.50 541.50L1732.00 549.00Z" fill="#2f9bff"/><circle cx="1755.40" cy="522.10" r="1.9" fill="#f28a3c"/><text x="1732.00" y="520.00" font-size="11" font-weight="700" fill="#111" text-anchor="middle" stroke="#111" stroke-width="0.3">Led PAR</text><text x="1732.00" y="563.20" font-size="9.6" font-weight="700" fill="#333" text-anchor="middle" letter-spacing="0.25" stroke="#333" stroke-width="0.2">6.17</text><circle cx="1732.00" cy="578.10" r="11.6" fill="rgba(228,228,228,0.6)" stroke="#707070" stroke-width="1.15"/><text x="1732.00" y="581.20" font-size="9.8" font-weight="700" fill="#000" text-anchor="middle" letter-spacing="0.1" stroke="#000" stroke-width="0.3">707</text><rect x="1719.20" y="611.70" width="25.6" height="25.6" rx="6.5" fill="rgba(200,200,200,0.3)"/><circle cx="1727.50" cy="624.30" r="11.9" fill="rgba(243,218,198,0.9)" stroke="#9a9a9a" stroke-width="0.8"/><line x1="1721.20" y1="624.30" x2="1738.50" y2="624.30" stroke="#f39a4c" stroke-width="1.6" stroke-dasharray="1.6 1.6"/><rect x="1719.20" y="611.70" width="25.6" height="25.6" rx="6.5" fill="none" stroke="#151515" stroke-width="1.45"/><line x1="1732" y1="623.30" x2="1732" y2="632.50" stroke="#2f9bff" stroke-width="2.6" stroke-linecap="round"/><path d="M1728.50 629.50Q1732.00 630.70 1735.50 629.50L1732.00 637.00Z" fill="#2f9bff"/><circle cx="1755.40" cy="610.10" r="1.9" fill="#f28a3c"/><text x="1732.00" y="608.00" font-size="11" font-weight="700" fill="#111" text-anchor="middle" stroke="#111" stroke-width="0.3">Led PAR</text><text x="1732.00" y="651.20" font-size="9.6" font-weight="700" fill="#333" text-anchor="middle" letter-spacing="0.25" stroke="#333" stroke-width="0.2">6.9</text><circle cx="1732.00" cy="666.10" r="11.6" fill="rgba(228,228,228,0.6)" stroke="#707070" stroke-width="1.15"/><text x="1732.00" y="669.20" font-size="9.8" font-weight="700" fill="#000" text-anchor="middle" letter-spacing="0.1" stroke="#000" stroke-width="0.3">706</text><rect x="793.50" y="729.70" width="25.6" height="25.6" rx="6.5" fill="rgba(200,200,200,0.3)"/><rect x="794.50" y="733.30" width="18.6" height="18.2" rx="4.5" fill="rgba(205,205,205,0.85)" stroke="#3a3a3a" stroke-width="1"/><rect x="796.00" y="734.90" width="15.6" height="15" rx="3.5" fill="rgba(195,195,195,0.7)" stroke="#777" stroke-width="0.6"/><circle cx="803.10" cy="741.90" r="4.6" fill="#bdbdbd" stroke="#444" stroke-width="0.9"/><rect x="793.50" y="729.70" width="25.6" height="25.6" rx="6.5" fill="none" stroke="#151515" stroke-width="1.45"/><line x1="806.3" y1="741.30" x2="806.3" y2="750.50" stroke="#2f9bff" stroke-width="2.6" stroke-linecap="round"/><path d="M802.80 747.50Q806.30 748.70 809.80 747.50L806.30 755.00Z" fill="#2f9bff"/><text x="806.30" y="726.00" font-size="11" font-weight="700" fill="#111" text-anchor="middle" stroke="#111" stroke-width="0.3">PC</text><text x="806.30" y="769.20" font-size="9.6" font-weight="700" fill="#333" text-anchor="middle" letter-spacing="0.25" stroke="#333" stroke-width="0.2">2.1</text><circle cx="806.30" cy="784.10" r="11.6" fill="rgba(228,228,228,0.6)" stroke="#707070" stroke-width="1.15"/><text x="806.30" y="787.20" font-size="9.8" font-weight="700" fill="#000" text-anchor="middle" letter-spacing="0.1" stroke="#000" stroke-width="0.3">301</text><rect x="881.20" y="729.70" width="25.6" height="25.6" rx="6.5" fill="rgba(200,200,200,0.3)"/><rect x="900.50" y="736.90" width="12.5" height="10.6" rx="3.5" fill="rgba(212,212,212,0.85)" stroke="#6a6a6a" stroke-width="0.8"/><rect x="882.00" y="736.90" width="19.3" height="10.8" rx="3" fill="rgba(200,200,200,0.9)" stroke="#222" stroke-width="1.1"/><circle cx="886.40" cy="751.20" r="1.5" fill="#444"/><rect x="881.20" y="729.70" width="25.6" height="25.6" rx="6.5" fill="none" stroke="#151515" stroke-width="1.45"/><line x1="894" y1="741.30" x2="894" y2="750.50" stroke="#2f9bff" stroke-width="2.6" stroke-linecap="round"/><path d="M890.50 747.50Q894.00 748.70 897.50 747.50L894.00 755.00Z" fill="#2f9bff"/><text x="894.00" y="726.00" font-size="11" font-weight="700" fill="#111" text-anchor="middle" stroke="#111" stroke-width="0.3">Guitar</text><text x="894.00" y="769.20" font-size="9.6" font-weight="700" fill="#333" text-anchor="middle" letter-spacing="0.25" stroke="#333" stroke-width="0.2">2.2</text><circle cx="894.00" cy="784.10" r="11.6" fill="rgba(228,228,228,0.6)" stroke="#707070" stroke-width="1.15"/><text x="894.00" y="787.20" font-size="9.8" font-weight="700" fill="#000" text-anchor="middle" letter-spacing="0.1" stroke="#000" stroke-width="0.3">401</text><rect x="1086.40" y="729.70" width="25.6" height="25.6" rx="6.5" fill="rgba(200,200,200,0.3)"/><rect x="1087.40" y="733.30" width="18.6" height="18.2" rx="4.5" fill="rgba(205,205,205,0.85)" stroke="#3a3a3a" stroke-width="1"/><rect x="1088.90" y="734.90" width="15.6" height="15" rx="3.5" fill="rgba(195,195,195,0.7)" stroke="#777" stroke-width="0.6"/><circle cx="1096.00" cy="741.90" r="4.6" fill="#bdbdbd" stroke="#444" stroke-width="0.9"/><rect x="1086.40" y="729.70" width="25.6" height="25.6" rx="6.5" fill="none" stroke="#151515" stroke-width="1.45"/><line x1="1099.2" y1="741.30" x2="1099.2" y2="750.50" stroke="#2f9bff" stroke-width="2.6" stroke-linecap="round"/><path d="M1095.70 747.50Q1099.20 748.70 1102.70 747.50L1099.20 755.00Z" fill="#2f9bff"/><text x="1099.20" y="726.00" font-size="11" font-weight="700" fill="#111" text-anchor="middle" stroke="#111" stroke-width="0.3">PC</text><text x="1099.20" y="769.20" font-size="9.6" font-weight="700" fill="#333" text-anchor="middle" letter-spacing="0.25" stroke="#333" stroke-width="0.2">2.3</text><circle cx="1099.20" cy="784.10" r="11.6" fill="rgba(228,228,228,0.6)" stroke="#707070" stroke-width="1.15"/><text x="1099.20" y="787.20" font-size="9.8" font-weight="700" fill="#000" text-anchor="middle" letter-spacing="0.1" stroke="#000" stroke-width="0.3">302</text><rect x="1233.00" y="729.70" width="25.6" height="25.6" rx="6.5" fill="rgba(200,200,200,0.3)"/><rect x="1252.30" y="736.90" width="12.5" height="10.6" rx="3.5" fill="rgba(212,212,212,0.85)" stroke="#6a6a6a" stroke-width="0.8"/><rect x="1233.80" y="736.90" width="19.3" height="10.8" rx="3" fill="rgba(200,200,200,0.9)" stroke="#222" stroke-width="1.1"/><circle cx="1238.20" cy="751.20" r="1.5" fill="#444"/><rect x="1233.00" y="729.70" width="25.6" height="25.6" rx="6.5" fill="none" stroke="#151515" stroke-width="1.45"/><line x1="1245.8" y1="741.30" x2="1245.8" y2="750.50" stroke="#2f9bff" stroke-width="2.6" stroke-linecap="round"/><path d="M1242.30 747.50Q1245.80 748.70 1249.30 747.50L1245.80 755.00Z" fill="#2f9bff"/><text x="1245.80" y="726.00" font-size="11" font-weight="700" fill="#111" text-anchor="middle" stroke="#111" stroke-width="0.3">Singer</text><text x="1245.80" y="769.20" font-size="9.6" font-weight="700" fill="#333" text-anchor="middle" letter-spacing="0.25" stroke="#333" stroke-width="0.2">2.4</text><circle cx="1245.80" cy="784.10" r="11.6" fill="rgba(228,228,228,0.6)" stroke="#707070" stroke-width="1.15"/><text x="1245.80" y="787.20" font-size="9.8" font-weight="700" fill="#000" text-anchor="middle" letter-spacing="0.1" stroke="#000" stroke-width="0.3">402</text><rect x="1379.80" y="729.70" width="25.6" height="25.6" rx="6.5" fill="rgba(200,200,200,0.3)"/><rect x="1380.80" y="733.30" width="18.6" height="18.2" rx="4.5" fill="rgba(205,205,205,0.85)" stroke="#3a3a3a" stroke-width="1"/><rect x="1382.30" y="734.90" width="15.6" height="15" rx="3.5" fill="rgba(195,195,195,0.7)" stroke="#777" stroke-width="0.6"/><circle cx="1389.40" cy="741.90" r="4.6" fill="#bdbdbd" stroke="#444" stroke-width="0.9"/><rect x="1379.80" y="729.70" width="25.6" height="25.6" rx="6.5" fill="none" stroke="#151515" stroke-width="1.45"/><line x1="1392.6" y1="741.30" x2="1392.6" y2="750.50" stroke="#2f9bff" stroke-width="2.6" stroke-linecap="round"/><path d="M1389.10 747.50Q1392.60 748.70 1396.10 747.50L1392.60 755.00Z" fill="#2f9bff"/><text x="1392.60" y="726.00" font-size="11" font-weight="700" fill="#111" text-anchor="middle" stroke="#111" stroke-width="0.3">PC</text><text x="1392.60" y="769.20" font-size="9.6" font-weight="700" fill="#333" text-anchor="middle" letter-spacing="0.25" stroke="#333" stroke-width="0.2">2.5</text><circle cx="1392.60" cy="784.10" r="11.6" fill="rgba(228,228,228,0.6)" stroke="#707070" stroke-width="1.15"/><text x="1392.60" y="787.20" font-size="9.8" font-weight="700" fill="#000" text-anchor="middle" letter-spacing="0.1" stroke="#000" stroke-width="0.3">303</text><rect x="1585.20" y="729.70" width="25.6" height="25.6" rx="6.5" fill="rgba(200,200,200,0.3)"/><rect x="1604.50" y="736.90" width="12.5" height="10.6" rx="3.5" fill="rgba(212,212,212,0.85)" stroke="#6a6a6a" stroke-width="0.8"/><rect x="1586.00" y="736.90" width="19.3" height="10.8" rx="3" fill="rgba(200,200,200,0.9)" stroke="#222" stroke-width="1.1"/><circle cx="1590.40" cy="751.20" r="1.5" fill="#444"/><rect x="1585.20" y="729.70" width="25.6" height="25.6" rx="6.5" fill="none" stroke="#151515" stroke-width="1.45"/><line x1="1598" y1="741.30" x2="1598" y2="750.50" stroke="#2f9bff" stroke-width="2.6" stroke-linecap="round"/><path d="M1594.50 747.50Q1598.00 748.70 1601.50 747.50L1598.00 755.00Z" fill="#2f9bff"/><text x="1598.00" y="726.00" font-size="11" font-weight="700" fill="#111" text-anchor="middle" stroke="#111" stroke-width="0.3">Bass</text><text x="1598.00" y="769.20" font-size="9.6" font-weight="700" fill="#333" text-anchor="middle" letter-spacing="0.25" stroke="#333" stroke-width="0.2">2.6</text><circle cx="1598.00" cy="784.10" r="11.6" fill="rgba(228,228,228,0.6)" stroke="#707070" stroke-width="1.15"/><text x="1598.00" y="787.20" font-size="9.8" font-weight="700" fill="#000" text-anchor="middle" letter-spacing="0.1" stroke="#000" stroke-width="0.3">403</text><rect x="1673.20" y="729.70" width="25.6" height="25.6" rx="6.5" fill="rgba(200,200,200,0.3)"/><rect x="1674.20" y="733.30" width="18.6" height="18.2" rx="4.5" fill="rgba(205,205,205,0.85)" stroke="#3a3a3a" stroke-width="1"/><rect x="1675.70" y="734.90" width="15.6" height="15" rx="3.5" fill="rgba(195,195,195,0.7)" stroke="#777" stroke-width="0.6"/><circle cx="1682.80" cy="741.90" r="4.6" fill="#bdbdbd" stroke="#444" stroke-width="0.9"/><rect x="1673.20" y="729.70" width="25.6" height="25.6" rx="6.5" fill="none" stroke="#151515" stroke-width="1.45"/><line x1="1686" y1="741.30" x2="1686" y2="750.50" stroke="#2f9bff" stroke-width="2.6" stroke-linecap="round"/><path d="M1682.50 747.50Q1686.00 748.70 1689.50 747.50L1686.00 755.00Z" fill="#2f9bff"/><text x="1686.00" y="726.00" font-size="11" font-weight="700" fill="#111" text-anchor="middle" stroke="#111" stroke-width="0.3">PC</text><text x="1686.00" y="769.20" font-size="9.6" font-weight="700" fill="#333" text-anchor="middle" letter-spacing="0.25" stroke="#333" stroke-width="0.2">2.7</text><circle cx="1686.00" cy="784.10" r="11.6" fill="rgba(228,228,228,0.6)" stroke="#707070" stroke-width="1.15"/><text x="1686.00" y="787.20" font-size="9.8" font-weight="700" fill="#000" text-anchor="middle" letter-spacing="0.1" stroke="#000" stroke-width="0.3">304</text><rect x="795.20" y="897.70" width="25.6" height="25.6" rx="6.5" fill="rgba(200,200,200,0.3)"/><rect x="814.50" y="906.30" width="13.3" height="8.2" rx="4.1" fill="rgba(205,205,205,0.6)" stroke="#555" stroke-width="0.9"/><circle cx="818.30" cy="910.30" r="3.4" fill="none" stroke="#555" stroke-width="0.8"/><circle cx="806.10" cy="910.30" r="7.7" fill="rgba(190,190,190,0.6)" stroke="#333" stroke-width="1"/><rect x="795.20" y="897.70" width="25.6" height="25.6" rx="6.5" fill="none" stroke="#151515" stroke-width="1.45"/><line x1="808.0" y1="909.30" x2="808.0" y2="918.50" stroke="#2f9bff" stroke-width="2.6" stroke-linecap="round"/><path d="M804.50 915.50Q808.00 916.70 811.50 915.50L808.00 923.00Z" fill="#2f9bff"/><text x="808.00" y="894.00" font-size="11" font-weight="700" fill="#111" text-anchor="middle" stroke="#111" stroke-width="0.3">Fresnel</text><text x="808.00" y="937.20" font-size="9.6" font-weight="700" fill="#333" text-anchor="middle" letter-spacing="0.25" stroke="#333" stroke-width="0.2">1.1</text><circle cx="808.00" cy="952.10" r="11.6" fill="rgba(228,228,228,0.6)" stroke="#707070" stroke-width="1.15"/><text x="808.00" y="955.20" font-size="9.8" font-weight="700" fill="#000" text-anchor="middle" letter-spacing="0.1" stroke="#000" stroke-width="0.3">101</text><rect x="849.80" y="899.50" width="40.7" height="22.1" rx="5" fill="rgba(246,196,242,0.45)" stroke="#c9a3c4" stroke-width="0.8"/><rect x="861.20" y="897.90" width="25.2" height="25.2" rx="6.5" fill="rgba(200,140,195,0.18)" stroke="none"/><rect x="861.00" y="897.70" width="25.6" height="25.6" rx="6.5" fill="none" stroke="#151515" stroke-width="1.45"/><line x1="873.8" y1="909.30" x2="873.8" y2="918.50" stroke="#2f9bff" stroke-width="2.6" stroke-linecap="round"/><path d="M870.30 915.50Q873.80 916.70 877.30 915.50L873.80 923.00Z" fill="#2f9bff"/><circle cx="892.10" cy="895.90" r="2" fill="#e45ed6"/><circle cx="891.60" cy="901.30" r="2" fill="#e45ed6"/><circle cx="897.30" cy="901.30" r="2" fill="#e45ed6"/><text x="873.80" y="894.00" font-size="11" font-weight="700" fill="#111" text-anchor="middle" stroke="#111" stroke-width="0.3">Blinder</text><text x="873.80" y="937.20" font-size="9.6" font-weight="700" fill="#333" text-anchor="middle" letter-spacing="0.25" stroke="#333" stroke-width="0.2">1.2</text><circle cx="873.80" cy="952.10" r="11.6" fill="rgba(228,228,228,0.6)" stroke="#707070" stroke-width="1.15"/><text x="873.80" y="955.20" font-size="9.8" font-weight="700" fill="#000" text-anchor="middle" letter-spacing="0.1" stroke="#000" stroke-width="0.3">201</text><rect x="920.91" y="897.70" width="25.6" height="25.6" rx="6.5" fill="rgba(200,200,200,0.3)"/><rect x="940.21" y="906.30" width="13.3" height="8.2" rx="4.1" fill="rgba(205,205,205,0.6)" stroke="#555" stroke-width="0.9"/><circle cx="944.01" cy="910.30" r="3.4" fill="none" stroke="#555" stroke-width="0.8"/><circle cx="931.81" cy="910.30" r="7.7" fill="rgba(190,190,190,0.6)" stroke="#333" stroke-width="1"/><rect x="920.91" y="897.70" width="25.6" height="25.6" rx="6.5" fill="none" stroke="#151515" stroke-width="1.45"/><line x1="933.7142857142857" y1="909.30" x2="933.7142857142857" y2="918.50" stroke="#2f9bff" stroke-width="2.6" stroke-linecap="round"/><path d="M930.21 915.50Q933.71 916.70 937.21 915.50L933.71 923.00Z" fill="#2f9bff"/><text x="933.71" y="894.00" font-size="11" font-weight="700" fill="#111" text-anchor="middle" stroke="#111" stroke-width="0.3">Fresnel</text><text x="933.71" y="937.20" font-size="9.6" font-weight="700" fill="#333" text-anchor="middle" letter-spacing="0.25" stroke="#333" stroke-width="0.2">1.3</text><circle cx="933.71" cy="952.10" r="11.6" fill="rgba(228,228,228,0.6)" stroke="#707070" stroke-width="1.15"/><text x="933.71" y="955.20" font-size="9.8" font-weight="700" fill="#000" text-anchor="middle" letter-spacing="0.1" stroke="#000" stroke-width="0.3">102</text><rect x="974.50" y="899.50" width="40.7" height="22.1" rx="5" fill="rgba(246,196,242,0.45)" stroke="#c9a3c4" stroke-width="0.8"/><rect x="985.90" y="897.90" width="25.2" height="25.2" rx="6.5" fill="rgba(200,140,195,0.18)" stroke="none"/><rect x="985.70" y="897.70" width="25.6" height="25.6" rx="6.5" fill="none" stroke="#151515" stroke-width="1.45"/><line x1="998.5" y1="909.30" x2="998.5" y2="918.50" stroke="#2f9bff" stroke-width="2.6" stroke-linecap="round"/><path d="M995.00 915.50Q998.50 916.70 1002.00 915.50L998.50 923.00Z" fill="#2f9bff"/><circle cx="1016.80" cy="895.90" r="2" fill="#e45ed6"/><circle cx="1016.30" cy="901.30" r="2" fill="#e45ed6"/><circle cx="1022.00" cy="901.30" r="2" fill="#e45ed6"/><text x="998.50" y="894.00" font-size="11" font-weight="700" fill="#111" text-anchor="middle" stroke="#111" stroke-width="0.3">Blinder</text><text x="998.50" y="937.20" font-size="9.6" font-weight="700" fill="#333" text-anchor="middle" letter-spacing="0.25" stroke="#333" stroke-width="0.2">1.4</text><circle cx="998.50" cy="952.10" r="11.6" fill="rgba(228,228,228,0.6)" stroke="#707070" stroke-width="1.15"/><text x="998.50" y="955.20" font-size="9.8" font-weight="700" fill="#000" text-anchor="middle" letter-spacing="0.1" stroke="#000" stroke-width="0.3">202</text><rect x="1046.63" y="897.70" width="25.6" height="25.6" rx="6.5" fill="rgba(200,200,200,0.3)"/><rect x="1065.93" y="906.30" width="13.3" height="8.2" rx="4.1" fill="rgba(205,205,205,0.6)" stroke="#555" stroke-width="0.9"/><circle cx="1069.73" cy="910.30" r="3.4" fill="none" stroke="#555" stroke-width="0.8"/><circle cx="1057.53" cy="910.30" r="7.7" fill="rgba(190,190,190,0.6)" stroke="#333" stroke-width="1"/><rect x="1046.63" y="897.70" width="25.6" height="25.6" rx="6.5" fill="none" stroke="#151515" stroke-width="1.45"/><line x1="1059.4285714285713" y1="909.30" x2="1059.4285714285713" y2="918.50" stroke="#2f9bff" stroke-width="2.6" stroke-linecap="round"/><path d="M1055.93 915.50Q1059.43 916.70 1062.93 915.50L1059.43 923.00Z" fill="#2f9bff"/><text x="1059.43" y="894.00" font-size="11" font-weight="700" fill="#111" text-anchor="middle" stroke="#111" stroke-width="0.3">Fresnel</text><text x="1059.43" y="937.20" font-size="9.6" font-weight="700" fill="#333" text-anchor="middle" letter-spacing="0.25" stroke="#333" stroke-width="0.2">1.5</text><circle cx="1059.43" cy="952.10" r="11.6" fill="rgba(228,228,228,0.6)" stroke="#707070" stroke-width="1.15"/><text x="1059.43" y="955.20" font-size="9.8" font-weight="700" fill="#000" text-anchor="middle" letter-spacing="0.1" stroke="#000" stroke-width="0.3">103</text><rect x="1099.20" y="899.50" width="40.7" height="22.1" rx="5" fill="rgba(246,196,242,0.45)" stroke="#c9a3c4" stroke-width="0.8"/><rect x="1110.60" y="897.90" width="25.2" height="25.2" rx="6.5" fill="rgba(200,140,195,0.18)" stroke="none"/><rect x="1110.40" y="897.70" width="25.6" height="25.6" rx="6.5" fill="none" stroke="#151515" stroke-width="1.45"/><line x1="1123.2" y1="909.30" x2="1123.2" y2="918.50" stroke="#2f9bff" stroke-width="2.6" stroke-linecap="round"/><path d="M1119.70 915.50Q1123.20 916.70 1126.70 915.50L1123.20 923.00Z" fill="#2f9bff"/><circle cx="1141.50" cy="895.90" r="2" fill="#e45ed6"/><circle cx="1141.00" cy="901.30" r="2" fill="#e45ed6"/><circle cx="1146.70" cy="901.30" r="2" fill="#e45ed6"/><text x="1123.20" y="894.00" font-size="11" font-weight="700" fill="#111" text-anchor="middle" stroke="#111" stroke-width="0.3">Blinder</text><text x="1123.20" y="937.20" font-size="9.6" font-weight="700" fill="#333" text-anchor="middle" letter-spacing="0.25" stroke="#333" stroke-width="0.2">1.6</text><circle cx="1123.20" cy="952.10" r="11.6" fill="rgba(228,228,228,0.6)" stroke="#707070" stroke-width="1.15"/><text x="1123.20" y="955.20" font-size="9.8" font-weight="700" fill="#000" text-anchor="middle" letter-spacing="0.1" stroke="#000" stroke-width="0.3">203</text><rect x="1172.34" y="897.70" width="25.6" height="25.6" rx="6.5" fill="rgba(200,200,200,0.3)"/><rect x="1191.64" y="906.30" width="13.3" height="8.2" rx="4.1" fill="rgba(205,205,205,0.6)" stroke="#555" stroke-width="0.9"/><circle cx="1195.44" cy="910.30" r="3.4" fill="none" stroke="#555" stroke-width="0.8"/><circle cx="1183.24" cy="910.30" r="7.7" fill="rgba(190,190,190,0.6)" stroke="#333" stroke-width="1"/><rect x="1172.34" y="897.70" width="25.6" height="25.6" rx="6.5" fill="none" stroke="#151515" stroke-width="1.45"/><line x1="1185.142857142857" y1="909.30" x2="1185.142857142857" y2="918.50" stroke="#2f9bff" stroke-width="2.6" stroke-linecap="round"/><path d="M1181.64 915.50Q1185.14 916.70 1188.64 915.50L1185.14 923.00Z" fill="#2f9bff"/><text x="1185.14" y="894.00" font-size="11" font-weight="700" fill="#111" text-anchor="middle" stroke="#111" stroke-width="0.3">Fresnel</text><text x="1185.14" y="937.20" font-size="9.6" font-weight="700" fill="#333" text-anchor="middle" letter-spacing="0.25" stroke="#333" stroke-width="0.2">1.7</text><circle cx="1185.14" cy="952.10" r="11.6" fill="rgba(228,228,228,0.6)" stroke="#707070" stroke-width="1.15"/><text x="1185.14" y="955.20" font-size="9.8" font-weight="700" fill="#000" text-anchor="middle" letter-spacing="0.1" stroke="#000" stroke-width="0.3">104</text><rect x="1223.90" y="899.50" width="40.7" height="22.1" rx="5" fill="rgba(246,196,242,0.45)" stroke="#c9a3c4" stroke-width="0.8"/><rect x="1235.30" y="897.90" width="25.2" height="25.2" rx="6.5" fill="rgba(200,140,195,0.18)" stroke="none"/><rect x="1235.10" y="897.70" width="25.6" height="25.6" rx="6.5" fill="none" stroke="#151515" stroke-width="1.45"/><line x1="1247.9" y1="909.30" x2="1247.9" y2="918.50" stroke="#2f9bff" stroke-width="2.6" stroke-linecap="round"/><path d="M1244.40 915.50Q1247.90 916.70 1251.40 915.50L1247.90 923.00Z" fill="#2f9bff"/><circle cx="1266.20" cy="895.90" r="2" fill="#e45ed6"/><circle cx="1265.70" cy="901.30" r="2" fill="#e45ed6"/><circle cx="1271.40" cy="901.30" r="2" fill="#e45ed6"/><text x="1247.90" y="894.00" font-size="11" font-weight="700" fill="#111" text-anchor="middle" stroke="#111" stroke-width="0.3">Blinder</text><text x="1247.90" y="937.20" font-size="9.6" font-weight="700" fill="#333" text-anchor="middle" letter-spacing="0.25" stroke="#333" stroke-width="0.2">1.8</text><circle cx="1247.90" cy="952.10" r="11.6" fill="rgba(228,228,228,0.6)" stroke="#707070" stroke-width="1.15"/><text x="1247.90" y="955.20" font-size="9.8" font-weight="700" fill="#000" text-anchor="middle" letter-spacing="0.1" stroke="#000" stroke-width="0.3">204</text><rect x="1298.06" y="897.70" width="25.6" height="25.6" rx="6.5" fill="rgba(200,200,200,0.3)"/><rect x="1317.36" y="906.30" width="13.3" height="8.2" rx="4.1" fill="rgba(205,205,205,0.6)" stroke="#555" stroke-width="0.9"/><circle cx="1321.16" cy="910.30" r="3.4" fill="none" stroke="#555" stroke-width="0.8"/><circle cx="1308.96" cy="910.30" r="7.7" fill="rgba(190,190,190,0.6)" stroke="#333" stroke-width="1"/><rect x="1298.06" y="897.70" width="25.6" height="25.6" rx="6.5" fill="none" stroke="#151515" stroke-width="1.45"/><line x1="1310.857142857143" y1="909.30" x2="1310.857142857143" y2="918.50" stroke="#2f9bff" stroke-width="2.6" stroke-linecap="round"/><path d="M1307.36 915.50Q1310.86 916.70 1314.36 915.50L1310.86 923.00Z" fill="#2f9bff"/><text x="1310.86" y="894.00" font-size="11" font-weight="700" fill="#111" text-anchor="middle" stroke="#111" stroke-width="0.3">Fresnel</text><text x="1310.86" y="937.20" font-size="9.6" font-weight="700" fill="#333" text-anchor="middle" letter-spacing="0.25" stroke="#333" stroke-width="0.2">1.9</text><circle cx="1310.86" cy="952.10" r="11.6" fill="rgba(228,228,228,0.6)" stroke="#707070" stroke-width="1.15"/><text x="1310.86" y="955.20" font-size="9.8" font-weight="700" fill="#000" text-anchor="middle" letter-spacing="0.1" stroke="#000" stroke-width="0.3">105</text><rect x="1348.60" y="899.50" width="40.7" height="22.1" rx="5" fill="rgba(246,196,242,0.45)" stroke="#c9a3c4" stroke-width="0.8"/><rect x="1360.00" y="897.90" width="25.2" height="25.2" rx="6.5" fill="rgba(200,140,195,0.18)" stroke="none"/><rect x="1359.80" y="897.70" width="25.6" height="25.6" rx="6.5" fill="none" stroke="#151515" stroke-width="1.45"/><line x1="1372.6" y1="909.30" x2="1372.6" y2="918.50" stroke="#2f9bff" stroke-width="2.6" stroke-linecap="round"/><path d="M1369.10 915.50Q1372.60 916.70 1376.10 915.50L1372.60 923.00Z" fill="#2f9bff"/><circle cx="1390.90" cy="895.90" r="2" fill="#e45ed6"/><circle cx="1390.40" cy="901.30" r="2" fill="#e45ed6"/><circle cx="1396.10" cy="901.30" r="2" fill="#e45ed6"/><text x="1372.60" y="894.00" font-size="11" font-weight="700" fill="#111" text-anchor="middle" stroke="#111" stroke-width="0.3">Blinder</text><text x="1372.60" y="937.20" font-size="9.6" font-weight="700" fill="#333" text-anchor="middle" letter-spacing="0.25" stroke="#333" stroke-width="0.2">1.10</text><circle cx="1372.60" cy="952.10" r="11.6" fill="rgba(228,228,228,0.6)" stroke="#707070" stroke-width="1.15"/><text x="1372.60" y="955.20" font-size="9.8" font-weight="700" fill="#000" text-anchor="middle" letter-spacing="0.1" stroke="#000" stroke-width="0.3">205</text><rect x="1423.77" y="897.70" width="25.6" height="25.6" rx="6.5" fill="rgba(200,200,200,0.3)"/><rect x="1443.07" y="906.30" width="13.3" height="8.2" rx="4.1" fill="rgba(205,205,205,0.6)" stroke="#555" stroke-width="0.9"/><circle cx="1446.87" cy="910.30" r="3.4" fill="none" stroke="#555" stroke-width="0.8"/><circle cx="1434.67" cy="910.30" r="7.7" fill="rgba(190,190,190,0.6)" stroke="#333" stroke-width="1"/><rect x="1423.77" y="897.70" width="25.6" height="25.6" rx="6.5" fill="none" stroke="#151515" stroke-width="1.45"/><line x1="1436.5714285714284" y1="909.30" x2="1436.5714285714284" y2="918.50" stroke="#2f9bff" stroke-width="2.6" stroke-linecap="round"/><path d="M1433.07 915.50Q1436.57 916.70 1440.07 915.50L1436.57 923.00Z" fill="#2f9bff"/><text x="1436.57" y="894.00" font-size="11" font-weight="700" fill="#111" text-anchor="middle" stroke="#111" stroke-width="0.3">Fresnel</text><text x="1436.57" y="937.20" font-size="9.6" font-weight="700" fill="#333" text-anchor="middle" letter-spacing="0.25" stroke="#333" stroke-width="0.2">1.11</text><circle cx="1436.57" cy="952.10" r="11.6" fill="rgba(228,228,228,0.6)" stroke="#707070" stroke-width="1.15"/><text x="1436.57" y="955.20" font-size="9.8" font-weight="700" fill="#000" text-anchor="middle" letter-spacing="0.1" stroke="#000" stroke-width="0.3">106</text><rect x="1473.30" y="899.50" width="40.7" height="22.1" rx="5" fill="rgba(246,196,242,0.45)" stroke="#c9a3c4" stroke-width="0.8"/><rect x="1484.70" y="897.90" width="25.2" height="25.2" rx="6.5" fill="rgba(200,140,195,0.18)" stroke="none"/><rect x="1484.50" y="897.70" width="25.6" height="25.6" rx="6.5" fill="none" stroke="#151515" stroke-width="1.45"/><line x1="1497.3" y1="909.30" x2="1497.3" y2="918.50" stroke="#2f9bff" stroke-width="2.6" stroke-linecap="round"/><path d="M1493.80 915.50Q1497.30 916.70 1500.80 915.50L1497.30 923.00Z" fill="#2f9bff"/><circle cx="1515.60" cy="895.90" r="2" fill="#e45ed6"/><circle cx="1515.10" cy="901.30" r="2" fill="#e45ed6"/><circle cx="1520.80" cy="901.30" r="2" fill="#e45ed6"/><text x="1497.30" y="894.00" font-size="11" font-weight="700" fill="#111" text-anchor="middle" stroke="#111" stroke-width="0.3">Blinder</text><text x="1497.30" y="937.20" font-size="9.6" font-weight="700" fill="#333" text-anchor="middle" letter-spacing="0.25" stroke="#333" stroke-width="0.2">1.12</text><circle cx="1497.30" cy="952.10" r="11.6" fill="rgba(228,228,228,0.6)" stroke="#707070" stroke-width="1.15"/><text x="1497.30" y="955.20" font-size="9.8" font-weight="700" fill="#000" text-anchor="middle" letter-spacing="0.1" stroke="#000" stroke-width="0.3">206</text><rect x="1549.49" y="897.70" width="25.6" height="25.6" rx="6.5" fill="rgba(200,200,200,0.3)"/><rect x="1568.79" y="906.30" width="13.3" height="8.2" rx="4.1" fill="rgba(205,205,205,0.6)" stroke="#555" stroke-width="0.9"/><circle cx="1572.59" cy="910.30" r="3.4" fill="none" stroke="#555" stroke-width="0.8"/><circle cx="1560.39" cy="910.30" r="7.7" fill="rgba(190,190,190,0.6)" stroke="#333" stroke-width="1"/><rect x="1549.49" y="897.70" width="25.6" height="25.6" rx="6.5" fill="none" stroke="#151515" stroke-width="1.45"/><line x1="1562.2857142857142" y1="909.30" x2="1562.2857142857142" y2="918.50" stroke="#2f9bff" stroke-width="2.6" stroke-linecap="round"/><path d="M1558.79 915.50Q1562.29 916.70 1565.79 915.50L1562.29 923.00Z" fill="#2f9bff"/><text x="1562.29" y="894.00" font-size="11" font-weight="700" fill="#111" text-anchor="middle" stroke="#111" stroke-width="0.3">Fresnel</text><text x="1562.29" y="937.20" font-size="9.6" font-weight="700" fill="#333" text-anchor="middle" letter-spacing="0.25" stroke="#333" stroke-width="0.2">1.13</text><circle cx="1562.29" cy="952.10" r="11.6" fill="rgba(228,228,228,0.6)" stroke="#707070" stroke-width="1.15"/><text x="1562.29" y="955.20" font-size="9.8" font-weight="700" fill="#000" text-anchor="middle" letter-spacing="0.1" stroke="#000" stroke-width="0.3">107</text><rect x="1598.00" y="899.50" width="40.7" height="22.1" rx="5" fill="rgba(246,196,242,0.45)" stroke="#c9a3c4" stroke-width="0.8"/><rect x="1609.40" y="897.90" width="25.2" height="25.2" rx="6.5" fill="rgba(200,140,195,0.18)" stroke="none"/><rect x="1609.20" y="897.70" width="25.6" height="25.6" rx="6.5" fill="none" stroke="#151515" stroke-width="1.45"/><line x1="1622.0" y1="909.30" x2="1622.0" y2="918.50" stroke="#2f9bff" stroke-width="2.6" stroke-linecap="round"/><path d="M1618.50 915.50Q1622.00 916.70 1625.50 915.50L1622.00 923.00Z" fill="#2f9bff"/><circle cx="1640.30" cy="895.90" r="2" fill="#e45ed6"/><circle cx="1639.80" cy="901.30" r="2" fill="#e45ed6"/><circle cx="1645.50" cy="901.30" r="2" fill="#e45ed6"/><text x="1622.00" y="894.00" font-size="11" font-weight="700" fill="#111" text-anchor="middle" stroke="#111" stroke-width="0.3">Blinder</text><text x="1622.00" y="937.20" font-size="9.6" font-weight="700" fill="#333" text-anchor="middle" letter-spacing="0.25" stroke="#333" stroke-width="0.2">1.14</text><circle cx="1622.00" cy="952.10" r="11.6" fill="rgba(228,228,228,0.6)" stroke="#707070" stroke-width="1.15"/><text x="1622.00" y="955.20" font-size="9.8" font-weight="700" fill="#000" text-anchor="middle" letter-spacing="0.1" stroke="#000" stroke-width="0.3">207</text><rect x="1675.20" y="897.70" width="25.6" height="25.6" rx="6.5" fill="rgba(200,200,200,0.3)"/><rect x="1694.50" y="906.30" width="13.3" height="8.2" rx="4.1" fill="rgba(205,205,205,0.6)" stroke="#555" stroke-width="0.9"/><circle cx="1698.30" cy="910.30" r="3.4" fill="none" stroke="#555" stroke-width="0.8"/><circle cx="1686.10" cy="910.30" r="7.7" fill="rgba(190,190,190,0.6)" stroke="#333" stroke-width="1"/><rect x="1675.20" y="897.70" width="25.6" height="25.6" rx="6.5" fill="none" stroke="#151515" stroke-width="1.45"/><line x1="1688.0" y1="909.30" x2="1688.0" y2="918.50" stroke="#2f9bff" stroke-width="2.6" stroke-linecap="round"/><path d="M1684.50 915.50Q1688.00 916.70 1691.50 915.50L1688.00 923.00Z" fill="#2f9bff"/><text x="1688.00" y="894.00" font-size="11" font-weight="700" fill="#111" text-anchor="middle" stroke="#111" stroke-width="0.3">Fresnel</text><text x="1688.00" y="937.20" font-size="9.6" font-weight="700" fill="#333" text-anchor="middle" letter-spacing="0.25" stroke="#333" stroke-width="0.2">1.15</text><circle cx="1688.00" cy="952.10" r="11.6" fill="rgba(228,228,228,0.6)" stroke="#707070" stroke-width="1.15"/><text x="1688.00" y="955.20" font-size="9.8" font-weight="700" fill="#000" text-anchor="middle" letter-spacing="0.1" stroke="#000" stroke-width="0.3">108</text>
<defs><linearGradient id="sbg" x1="0" y1="0" x2="0" y2="1"><stop offset="0" stop-color="#0f151e"/><stop offset="1" stop-color="#121b26"/></linearGradient></defs><rect x="0" y="49" width="360" height="955" fill="url(#sbg)"/><rect x="349.5" y="445.5" width="8.5" height="425" rx="4.25" fill="#2a323d"/><rect x="15" y="20" width="319.5" height="463.3" rx="12" fill="#0b0f17" stroke="#262c36" stroke-width="1"/><text x="28.00" y="65.30" font-size="12" font-weight="400" fill="#cdd2d9" text-anchor="start" >Scale fixture icon + Patch/ID/Name</text><text x="28.00" y="81.80" font-size="12" font-weight="400" fill="#cdd2d9" text-anchor="start" >Fixture Icon Size</text><rect x="31" y="96.8" width="290" height="8" rx="4" fill="#efefef"/><rect x="31" y="96.8" width="81.0" height="8" rx="4" fill="#0075d5"/><circle cx="112.0" cy="100.8" r="7.5" fill="#0075d5"/><text x="28.00" y="125.60" font-size="12" font-weight="400" fill="#cdd2d9" text-anchor="start" >Size: 90%</text><text x="28.00" y="156.30" font-size="12" font-weight="400" fill="#cdd2d9" text-anchor="start" >View X (Pan)</text><rect x="31" y="171.0" width="290" height="8" rx="4" fill="#efefef"/><rect x="31" y="171.0" width="153.2" height="8" rx="4" fill="#0075d5"/><circle cx="184.2" cy="175.0" r="7.5" fill="#0075d5"/><text x="28.00" y="200.40" font-size="12" font-weight="400" fill="#cdd2d9" text-anchor="start" >X: 108 px</text><text x="28.00" y="226.00" font-size="12" font-weight="400" fill="#cdd2d9" text-anchor="start" >View Y (Pan)</text><rect x="31" y="240.7" width="290" height="8" rx="4" fill="#efefef"/><rect x="31" y="240.7" width="140.3" height="8" rx="4" fill="#0075d5"/><circle cx="171.3" cy="244.7" r="7.5" fill="#0075d5"/><text x="28.00" y="269.80" font-size="12" font-weight="400" fill="#cdd2d9" text-anchor="start" >Y: -79 px</text><rect x="28.5" y="274" width="292" height="30.5" rx="11" fill="#10233a" stroke="#1f5c98" stroke-width="1"/><text x="174.50" y="293.50" font-size="12" font-weight="700" fill="#f2f4f7" text-anchor="middle" >Apply</text><text x="28.00" y="327.80" font-size="12" font-weight="400" fill="#cdd2d9" text-anchor="start" >Units</text><rect x="28.5" y="337.5" width="142" height="37.5" rx="10" fill="#090b10" stroke="#2a2f39" stroke-width="1"/><text x="43.50" y="361.20" font-size="13.3" font-weight="400" fill="#ffffff" text-anchor="start" >Metric (m)</text><path d="M157.8 355.8 L161.8 359.8 L165.8 355.8" fill="none" stroke="#fff" stroke-width="2.1"/><rect x="28.5" y="386.5" width="292" height="36" rx="11" fill="#1a1f28" stroke="#2c323c" stroke-width="1"/><text x="174.50" y="409.20" font-size="13.4" font-weight="700" fill="#f2f4f7" text-anchor="middle" >Reset View</text><rect x="28.5" y="433.5" width="292" height="36" rx="11" fill="#351b22" stroke="#b23b3f" stroke-width="1"/><text x="174.50" y="456.00" font-size="13.3" font-weight="700" fill="#f2f4f7" text-anchor="middle" >Deactivate License</text><rect x="15" y="495" width="319.5" height="45" rx="12" fill="#151b25" stroke="#2a303a" stroke-width="1"/><clipPath id="cp"><rect x="15" y="495" width="319.5" height="45" rx="12"/></clipPath><rect x="15" y="495" width="3" height="45" fill="#252c36" clip-path="url(#cp)"/><text x="30.50" y="524.20" font-size="15" font-weight="700" fill="#f4f6fa" text-anchor="start" letter-spacing="0.55" stroke="#f4f6fa" stroke-width="0.6">PALETTE</text><text x="316.00" y="527.50" font-size="11.5" font-weight="700" fill="#9aa0a8" text-anchor="middle" stroke="#9aa0a8" stroke-width="0.5">v</text><rect x="15" y="551.5" width="319.5" height="342" rx="12" fill="#0b0f17" stroke="#252b35" stroke-width="1"/><clipPath id="ce"><path d="M14.5 597 L14.5 563.5 Q14.5 551 27 551 L322.5 551 Q335 551 335 563.5 L335 597 Z"/></clipPath><path d="M15 596.5 L15 563.5 Q15 551.5 27 551.5 L322.5 551.5 Q334.5 551.5 334.5 563.5 L334.5 596.5 Z" fill="#20231f" stroke="#4f4626" stroke-width="1"/><rect x="14.5" y="551" width="3.6" height="46" fill="#bea13e" clip-path="url(#ce)"/><line x1="15" y1="596.5" x2="334.5" y2="596.5" stroke="#5b4e24" stroke-width="1"/><text x="30.50" y="581.40" font-size="15" font-weight="700" fill="#f7cd4e" text-anchor="start" letter-spacing="0.55" stroke="#f7cd4e" stroke-width="0.6">EDIT</text><text x="316.00" y="573.50" font-size="12" font-weight="700" fill="#9aa0a8" text-anchor="middle" stroke="#9aa0a8" stroke-width="0.5">^</text><rect x="28.5" y="615.5" width="91.5" height="32.5" rx="10" fill="#1a1f28" stroke="#2c323c" stroke-width="1"/><text x="74.25" y="636.05" font-size="12" font-weight="700" fill="#f2f4f7" text-anchor="middle" >↺ 90°</text><rect x="128.5" y="615.5" width="92.0" height="32.5" rx="10" fill="#1a1f28" stroke="#2c323c" stroke-width="1"/><text x="174.50" y="636.05" font-size="12" font-weight="700" fill="#f2f4f7" text-anchor="middle" >↻ 90°</text><rect x="229" y="615.5" width="91.5" height="32.5" rx="10" fill="#1a1f28" stroke="#2c323c" stroke-width="1"/><text x="274.75" y="636.05" font-size="12" font-weight="700" fill="#f2f4f7" text-anchor="middle" >↺ 15°</text><rect x="28.5" y="656.5" width="91.5" height="32.5" rx="10" fill="#1a1f28" stroke="#2c323c" stroke-width="1"/><text x="74.25" y="677.05" font-size="12" font-weight="700" fill="#f2f4f7" text-anchor="middle" >↻ 15°</text><rect x="128.5" y="656.5" width="92.0" height="32.5" rx="10" fill="#1a1f28" stroke="#2c323c" stroke-width="1"/><text x="174.50" y="677.05" font-size="12" font-weight="700" fill="#f2f4f7" text-anchor="middle" >-1°</text><rect x="229" y="656.5" width="91.5" height="32.5" rx="10" fill="#1a1f28" stroke="#2c323c" stroke-width="1"/><text x="274.75" y="677.05" font-size="12" font-weight="700" fill="#f2f4f7" text-anchor="middle" >+1°</text><rect x="28.5" y="697.5" width="91.5" height="45.0" rx="10" fill="#1a1f28" stroke="#2c323c" stroke-width="1"/><text x="74.25" y="717.50" font-size="12" font-weight="700" fill="#f2f4f7" text-anchor="middle" >Simple</text><text x="74.25" y="731.50" font-size="12" font-weight="700" fill="#f2f4f7" text-anchor="middle" >Duplicate</text><rect x="128.5" y="697.5" width="92.0" height="45.0" rx="10" fill="#1a1f28" stroke="#2c323c" stroke-width="1"/><text x="174.50" y="717.50" font-size="12" font-weight="700" fill="#f2f4f7" text-anchor="middle" >Ext.</text><text x="174.50" y="731.50" font-size="12" font-weight="700" fill="#f2f4f7" text-anchor="middle" >Duplicate</text><rect x="229" y="697.5" width="91.5" height="45.0" rx="10" fill="#1a1f28" stroke="#2c323c" stroke-width="1"/><text x="274.75" y="717.50" font-size="12" font-weight="700" fill="#f2f4f7" text-anchor="middle" >Fixture</text><text x="274.75" y="731.50" font-size="12" font-weight="700" fill="#f2f4f7" text-anchor="middle" >Array</text><rect x="28.5" y="751.5" width="91.5" height="31.0" rx="10" fill="#1a1f28" stroke="#2c323c" stroke-width="1"/><text x="74.25" y="771.30" font-size="12" font-weight="700" fill="#f2f4f7" text-anchor="middle" >Coords</text><rect x="128.5" y="751.5" width="92.0" height="31.0" rx="10" fill="#1a1f28" stroke="#2c323c" stroke-width="1"/><text x="174.50" y="771.30" font-size="12" font-weight="700" fill="#f2f4f7" text-anchor="middle" >Label</text><rect x="229" y="751.5" width="91.5" height="31.0" rx="10" fill="#1a1f28" stroke="#2c323c" stroke-width="1"/><text x="274.75" y="771.30" font-size="12" font-weight="700" fill="#f2f4f7" text-anchor="middle" >Delete</text><rect x="28.5" y="791.5" width="91.5" height="45.0" rx="10" fill="#1a1f28" stroke="#2c323c" stroke-width="1"/><text x="74.25" y="818.30" font-size="12" font-weight="700" fill="#f2f4f7" text-anchor="middle" >Undo</text><rect x="128.5" y="791.5" width="92.0" height="45.0" rx="10" fill="#1a1f28" stroke="#2c323c" stroke-width="1"/><text x="174.50" y="818.30" font-size="12" font-weight="700" fill="#f2f4f7" text-anchor="middle" >Redo</text><rect x="229" y="791.5" width="91.5" height="45.0" rx="10" fill="#1a1f28" stroke="#2c323c" stroke-width="1"/><text x="274.75" y="811.50" font-size="12" font-weight="700" fill="#f2f4f7" text-anchor="middle" >Clear</text><text x="274.75" y="825.50" font-size="12" font-weight="700" fill="#f2f4f7" text-anchor="middle" >Selection</text><rect x="28" y="845" width="92" height="35" rx="10" fill="#fdd34d"/><text x="74.00" y="866.80" font-size="13" font-weight="700" fill="#111" text-anchor="middle" letter-spacing="0.35" stroke="#111" stroke-width="0.3">Select: Off</text><rect x="15" y="904.5" width="319.5" height="200" rx="12" fill="#0b0f17" stroke="#252b35" stroke-width="1"/><clipPath id="cg"><path d="M14.5 950 L14.5 916.5 Q14.5 904 27 904 L322.5 904 Q335 904 335 916.5 L335 950 Z"/></clipPath><path d="M15 949.5 L15 916.5 Q15 904.5 27 904.5 L322.5 904.5 Q334.5 904.5 334.5 916.5 L334.5 949.5 Z" fill="#20231f" stroke="#4f4626" stroke-width="1"/><rect x="14.5" y="904" width="3.6" height="46" fill="#bea13e" clip-path="url(#cg)"/><line x1="15" y1="949.5" x2="334.5" y2="949.5" stroke="#5b4e24" stroke-width="1"/><text x="30.50" y="933.90" font-size="15" font-weight="700" fill="#f7cd4e" text-anchor="start" letter-spacing="0.55" stroke="#f7cd4e" stroke-width="0.6">GROUPS</text><text x="316.00" y="926.80" font-size="12" font-weight="700" fill="#9aa0a8" text-anchor="middle" stroke="#9aa0a8" stroke-width="0.5">^</text><rect x="28.5" y="968.5" width="91.5" height="60" rx="10" fill="#1a1f28" stroke="#2c323c" stroke-width="1"/><text x="74.00" y="988.00" font-size="12" font-weight="700" fill="#f2f4f7" text-anchor="middle" >Store</text><text x="74.00" y="1002.00" font-size="12" font-weight="700" fill="#f2f4f7" text-anchor="middle" >Group</text><rect x="128.5" y="968.5" width="92" height="60" rx="10" fill="#111111" stroke="#8a6f2e" stroke-width="1"/><text x="139.80" y="995.00" font-size="11" font-weight="700" fill="#ffffff" text-anchor="start" >Groups...</text><path d="M208 990 L212 994 L216 990" fill="none" stroke="#fff" stroke-width="2"/><rect x="229" y="968.5" width="91.5" height="60" rx="10" fill="#1a1f28" stroke="#2c323c" stroke-width="1"/><text x="274.50" y="988.00" font-size="12" font-weight="700" fill="#f2f4f7" text-anchor="middle" >Delete</text><text x="274.50" y="1002.00" font-size="12" font-weight="700" fill="#f2f4f7" text-anchor="middle" >Group</text><rect x="0" y="0" width="1919" height="48" fill="#0b0f17"/><rect x="0" y="48" width="360" height="1" fill="#262a31"/><text x="12.50" y="29.00" font-size="17" font-weight="700" fill="#f7cd4e" text-anchor="start" letter-spacing="0.1" stroke="#f7cd4e" stroke-width="0.5">LightPlot Studio</text>
</svg>
</body></html>
